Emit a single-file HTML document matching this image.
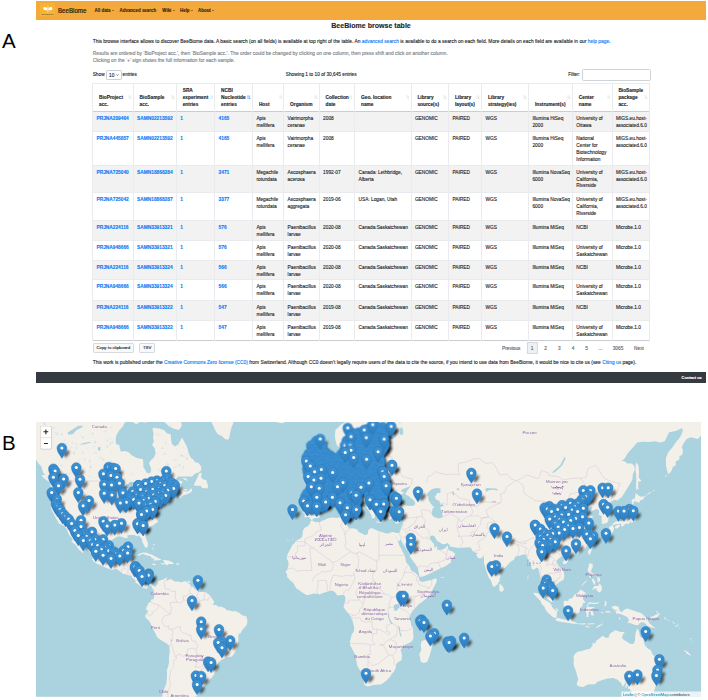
<!DOCTYPE html>
<html lang="en"><head><meta charset="utf-8"><title>BeeBiome browse table</title>
<style>
html,body{margin:0;padding:0;background:#fff}
body{width:708px;height:700px;position:relative;overflow:hidden}

#A{position:absolute;left:0;top:0;width:708px;height:400px;font-family:"Liberation Sans",Arial,Helvetica,sans-serif;color:#212529}
#A .t{position:absolute;white-space:nowrap;margin:0;-webkit-text-stroke:.12px currentColor}
#A a{color:#0a7cf6;text-decoration:none}
.nav{position:absolute;left:36px;top:1px;width:670.3px;height:18.5px;background:#f3a93b}
.logo{position:absolute;left:39.8px;top:3.4px}
.brand{left:57.8px;top:6.4px;transform:scaleX(.9);transform-origin:0 50%;font-size:6.85px;line-height:9px;color:#2a1d08;-webkit-text-stroke:.22px #2a1d08 !important}
.nl{top:7.3px;font-size:4.42px;line-height:7px;color:#33260f;font-weight:bold}
.car{display:inline-block;width:0;height:0;border-left:1.1px solid transparent;border-right:1.1px solid transparent;border-top:1.3px solid #3e3015;margin-left:1.3px;vertical-align:1px}
.title{left:92.6px;width:556.9px;text-align:center;top:21px;font-size:7.05px;line-height:9px;font-weight:bold}
.p1{left:92.7px;top:38.4px;font-size:4.89px;line-height:7px}
.p2{left:92.7px;top:50.2px;font-size:4.89px;line-height:7px;color:#7b8288}
.sm{font-size:4.75px;line-height:7px}
.sel{position:absolute;left:105.8px;top:70.1px;width:14.6px;height:7.6px;border:.6px solid #ccd0d4;border-radius:1.2px;background:#fff}
.inp{position:absolute;left:582.2px;top:69.3px;width:66.6px;height:9.9px;border:.6px solid #ced4da;border-radius:1.4px;background:#fff}
.tb{position:absolute;background:#fff}
.odd{position:absolute;background:#f2f2f2}
.hl{position:absolute;height:1px;background:#e9ebee}
.hl2{position:absolute;height:1.3px;background:#c9cdd1}
.vl{position:absolute;width:1px;background:#e9ebee}
.th{font-size:4.8px;line-height:7.15px;font-weight:bold}
.td{font-size:4.8px;line-height:6.9px}
.lk{color:#0a7cf6;font-weight:bold}
.si{position:absolute;top:94.6px;width:3.6px;height:4.6px}
.btn{position:absolute;top:342.6px;height:10.2px;border:.6px solid #d6d9dd;border-radius:1.2px;background:#f8f9fa;box-sizing:border-box}
.bt{left:0;right:0;text-align:center;top:.1px;font-size:4.35px;line-height:7px}
.pg{top:344.7px;font-size:4.75px;line-height:7px;color:#5c6166}
.pg.c{transform:translateX(-50%)}
.pgb{position:absolute;left:526.6px;top:341.6px;width:11.4px;height:12.2px;border:.6px solid #d5d9dd;background:#eef0f2;box-sizing:border-box}
.foot{position:absolute;left:36px;top:372px;width:670.3px;height:11px;background:#343a40}
.cu{left:681.6px;top:374.8px;font-size:3.9px;line-height:6px;color:#fff;font-weight:bold}
.lab{position:absolute;font-family:"Liberation Sans",Arial,sans-serif;font-size:20.5px;line-height:20px;color:#000}

</style></head><body>
<div class="lab" style="left:2px;top:31.3px">A</div>
<div class="lab" style="left:2px;top:433.3px">B</div>
<div id="A">
<div class="nav"></div>
<svg class="logo" viewBox="0 0 15 13.4" width="15" height="13.4"><rect width="15" height="13.4" fill="#f6b432"/><ellipse cx="5.4" cy="5.7" rx="2.2" ry="1.5" fill="#fff" transform="rotate(12 5.4 5.7)"/><ellipse cx="10.3" cy="5.7" rx="2.2" ry="1.5" fill="#fff" transform="rotate(-12 10.3 5.7)"/><ellipse cx="7.85" cy="6.3" rx=".75" ry="3.4" fill="#f3d9c4"/><circle cx="7.85" cy="2.7" r=".8" fill="#eebf8a"/><text x="7.7" y="12.2" font-size="2.5" font-weight="bold" text-anchor="middle" fill="#6d5a3c" font-family="Liberation Sans,sans-serif">BeeBiome</text></svg>
<span class="t brand">BeeBiome</span>
<span class="t nl" style="left:94.6px">All data<i class=car></i></span>
<span class="t nl" style="left:119.6px">Advanced search</span>
<span class="t nl" style="left:162.3px">Wiki<i class=car></i></span>
<span class="t nl" style="left:180.0px">Help<i class=car></i></span>
<span class="t nl" style="left:198.1px">About<i class=car></i></span>
<div class="t title">BeeBiome browse table</div>
<div class="t p1">This browse interface allows to discover BeeBiome data. A basic search (on all fields) is available at top right of the table. An <a>advanced search</a> is available to do a search on each field. More details on each field are available in our <a>help page</a>.</div>
<div class="t p2">Results are ordered by ‘BioProject acc.’, then ‘BioSample acc.’. The order could be changed by clicking on one column, then press shift and click on another column.</div>
<div class="t p2" style="top:57.2px">Clicking on the ‘+’ sign shows the full information for each sample.</div>
<span class="t sm" style="left:92.7px;top:70.7px">Show</span><span class="sel"><span class="t sm" style="left:2.2px;top:.6px">10</span><svg viewBox="0 0 6 4" style="position:absolute;left:9.6px;top:3.2px;width:3px;height:2px"><path d="M.7.7 3 3.2 5.3.7" fill="none" stroke="#333" stroke-width="1.1"/></svg></span><span class="t sm" style="left:122.6px;top:70.7px">entries</span>
<span class="t sm" style="left:285.8px;top:70.9px">Showing 1 to 10 of 30,645 entries</span>
<span class="t sm" style="left:568.2px;top:71.3px">Filter:</span><span class="inp"></span>
<div class="tb" style="left:92.6px;top:83.0px;width:556.9px;height:257.6px"></div>
<div class="odd" style="left:92.6px;top:111.5px;width:556.9px;height:20.1px"></div>
<div class="odd" style="left:92.6px;top:165.0px;width:556.9px;height:27.8px"></div>
<div class="odd" style="left:92.6px;top:220.2px;width:556.9px;height:19.8px"></div>
<div class="odd" style="left:92.6px;top:260.0px;width:556.9px;height:19.6px"></div>
<div class="odd" style="left:92.6px;top:300.0px;width:556.9px;height:20.0px"></div>
<div class="hl" style="left:92.6px;top:131.1px;width:556.9px"></div>
<div class="hl" style="left:92.6px;top:164.5px;width:556.9px"></div>
<div class="hl" style="left:92.6px;top:192.3px;width:556.9px"></div>
<div class="hl" style="left:92.6px;top:219.7px;width:556.9px"></div>
<div class="hl" style="left:92.6px;top:239.5px;width:556.9px"></div>
<div class="hl" style="left:92.6px;top:259.5px;width:556.9px"></div>
<div class="hl" style="left:92.6px;top:279.1px;width:556.9px"></div>
<div class="hl" style="left:92.6px;top:299.5px;width:556.9px"></div>
<div class="hl" style="left:92.6px;top:319.5px;width:556.9px"></div>
<div class="hl2" style="left:92.6px;top:110.5px;width:556.9px"></div>
<div class="hl2" style="left:92.6px;top:339.8px;width:556.9px;height:1px"></div>
<div class="vl" style="left:92.1px;top:83.0px;height:257.6px"></div>
<div class="vl" style="left:132.7px;top:83.0px;height:257.6px"></div>
<div class="vl" style="left:175.8px;top:83.0px;height:257.6px"></div>
<div class="vl" style="left:214.2px;top:83.0px;height:257.6px"></div>
<div class="vl" style="left:252.0px;top:83.0px;height:257.6px"></div>
<div class="vl" style="left:283.2px;top:83.0px;height:257.6px"></div>
<div class="vl" style="left:318.7px;top:83.0px;height:257.6px"></div>
<div class="vl" style="left:354.1px;top:83.0px;height:257.6px"></div>
<div class="vl" style="left:410.5px;top:83.0px;height:257.6px"></div>
<div class="vl" style="left:448.0px;top:83.0px;height:257.6px"></div>
<div class="vl" style="left:481.0px;top:83.0px;height:257.6px"></div>
<div class="vl" style="left:528.0px;top:83.0px;height:257.6px"></div>
<div class="vl" style="left:571.9px;top:83.0px;height:257.6px"></div>
<div class="vl" style="left:611.5px;top:83.0px;height:257.6px"></div>
<div class="vl" style="left:649.0px;top:83.0px;height:257.6px"></div>
<div class="hl" style="left:92.6px;top:82.5px;width:556.9px"></div>
<div class="t th" style="left:99.0px;top:94.0px">BioProject<br>acc.</div>
<svg class="si" style="left:128.0px" viewBox="0 0 8 10"><path d="M2.2 9V1.5M.4 3.2 2.2 1.2 4 3.2M5.8 1V8.5M4 6.8 5.8 8.8 7.6 6.8" fill="none" stroke="#d3d6d9" stroke-width="1"/></svg>
<div class="t th" style="left:139.6px;top:94.0px">BioSample<br>acc.</div>
<svg class="si" style="left:171.1px" viewBox="0 0 8 10"><path d="M2.2 9V1.5M.4 3.2 2.2 1.2 4 3.2M5.8 1V8.5M4 6.8 5.8 8.8 7.6 6.8" fill="none" stroke="#d3d6d9" stroke-width="1"/></svg>
<div class="t th" style="left:182.7px;top:86.8px">SRA<br>experiment<br>entries</div>
<svg class="si" style="left:209.5px" viewBox="0 0 8 10"><path d="M2.2 9V1.5M.4 3.2 2.2 1.2 4 3.2M5.8 1V8.5M4 6.8 5.8 8.8 7.6 6.8" fill="none" stroke="#d3d6d9" stroke-width="1"/></svg>
<div class="t th" style="left:221.1px;top:86.8px">NCBI<br>Nucleotide<br>entries</div>
<svg class="si" style="left:247.3px" viewBox="0 0 8 10"><path d="M2.2 9V1.5M.4 3.2 2.2 1.2 4 3.2M5.8 1V8.5M4 6.8 5.8 8.8 7.6 6.8" fill="none" stroke="#007bff" stroke-width="1"/></svg>
<div class="t th" style="left:258.9px;top:101.1px">Host</div>
<svg class="si" style="left:278.5px" viewBox="0 0 8 10"><path d="M2.2 9V1.5M.4 3.2 2.2 1.2 4 3.2M5.8 1V8.5M4 6.8 5.8 8.8 7.6 6.8" fill="none" stroke="#d3d6d9" stroke-width="1"/></svg>
<div class="t th" style="left:290.1px;top:101.1px">Organism</div>
<svg class="si" style="left:314.0px" viewBox="0 0 8 10"><path d="M2.2 9V1.5M.4 3.2 2.2 1.2 4 3.2M5.8 1V8.5M4 6.8 5.8 8.8 7.6 6.8" fill="none" stroke="#d3d6d9" stroke-width="1"/></svg>
<div class="t th" style="left:325.6px;top:94.0px">Collection<br>date</div>
<svg class="si" style="left:349.4px" viewBox="0 0 8 10"><path d="M2.2 9V1.5M.4 3.2 2.2 1.2 4 3.2M5.8 1V8.5M4 6.8 5.8 8.8 7.6 6.8" fill="none" stroke="#d3d6d9" stroke-width="1"/></svg>
<div class="t th" style="left:361.0px;top:94.0px">Geo. location<br>name</div>
<svg class="si" style="left:405.8px" viewBox="0 0 8 10"><path d="M2.2 9V1.5M.4 3.2 2.2 1.2 4 3.2M5.8 1V8.5M4 6.8 5.8 8.8 7.6 6.8" fill="none" stroke="#d3d6d9" stroke-width="1"/></svg>
<div class="t th" style="left:417.4px;top:94.0px">Library<br>source(s)</div>
<svg class="si" style="left:443.3px" viewBox="0 0 8 10"><path d="M2.2 9V1.5M.4 3.2 2.2 1.2 4 3.2M5.8 1V8.5M4 6.8 5.8 8.8 7.6 6.8" fill="none" stroke="#d3d6d9" stroke-width="1"/></svg>
<div class="t th" style="left:454.9px;top:94.0px">Library<br>layout(s)</div>
<svg class="si" style="left:476.3px" viewBox="0 0 8 10"><path d="M2.2 9V1.5M.4 3.2 2.2 1.2 4 3.2M5.8 1V8.5M4 6.8 5.8 8.8 7.6 6.8" fill="none" stroke="#d3d6d9" stroke-width="1"/></svg>
<div class="t th" style="left:487.9px;top:94.0px">Library<br>strategy(ies)</div>
<svg class="si" style="left:523.3px" viewBox="0 0 8 10"><path d="M2.2 9V1.5M.4 3.2 2.2 1.2 4 3.2M5.8 1V8.5M4 6.8 5.8 8.8 7.6 6.8" fill="none" stroke="#d3d6d9" stroke-width="1"/></svg>
<div class="t th" style="left:534.9px;top:101.1px">Instrument(s)</div>
<svg class="si" style="left:567.2px" viewBox="0 0 8 10"><path d="M2.2 9V1.5M.4 3.2 2.2 1.2 4 3.2M5.8 1V8.5M4 6.8 5.8 8.8 7.6 6.8" fill="none" stroke="#d3d6d9" stroke-width="1"/></svg>
<div class="t th" style="left:578.8px;top:94.0px">Center<br>name</div>
<svg class="si" style="left:606.8px" viewBox="0 0 8 10"><path d="M2.2 9V1.5M.4 3.2 2.2 1.2 4 3.2M5.8 1V8.5M4 6.8 5.8 8.8 7.6 6.8" fill="none" stroke="#d3d6d9" stroke-width="1"/></svg>
<div class="t th" style="left:618.4px;top:86.8px">BioSample<br>package<br>acc.</div>
<svg class="si" style="left:644.3px" viewBox="0 0 8 10"><path d="M2.2 9V1.5M.4 3.2 2.2 1.2 4 3.2M5.8 1V8.5M4 6.8 5.8 8.8 7.6 6.8" fill="none" stroke="#d3d6d9" stroke-width="1"/></svg>
<div class="t td lk" style="left:96.5px;top:116.1px">PRJNA209464</div>
<div class="t td lk" style="left:137.1px;top:116.1px">SAMN02213592</div>
<div class="t td lk" style="left:180.2px;top:116.1px">1</div>
<div class="t td lk" style="left:218.6px;top:116.1px">4165</div>
<div class="t td" style="left:256.4px;top:116.1px">Apis<br>mellifera</div>
<div class="t td" style="left:287.6px;top:116.1px">Vairimorpha<br>ceranae</div>
<div class="t td" style="left:323.1px;top:116.1px">2008</div>
<div class="t td" style="left:414.9px;top:116.1px">GENOMIC</div>
<div class="t td" style="left:452.4px;top:116.1px">PAIRED</div>
<div class="t td" style="left:485.4px;top:116.1px">WGS</div>
<div class="t td" style="left:532.4px;top:116.1px">Illumina HiSeq<br>2000</div>
<div class="t td" style="left:576.3px;top:116.1px">University of<br>Ottawa</div>
<div class="t td" style="left:615.9px;top:116.1px">MIGS.eu.host-<br>associated.6.0</div>
<div class="t td lk" style="left:96.5px;top:136.2px">PRJNA445857</div>
<div class="t td lk" style="left:137.1px;top:136.2px">SAMN02213592</div>
<div class="t td lk" style="left:180.2px;top:136.2px">1</div>
<div class="t td lk" style="left:218.6px;top:136.2px">4165</div>
<div class="t td" style="left:256.4px;top:136.2px">Apis<br>mellifera</div>
<div class="t td" style="left:287.6px;top:136.2px">Vairimorpha<br>ceranae</div>
<div class="t td" style="left:323.1px;top:136.2px">2008</div>
<div class="t td" style="left:414.9px;top:136.2px">GENOMIC</div>
<div class="t td" style="left:452.4px;top:136.2px">PAIRED</div>
<div class="t td" style="left:485.4px;top:136.2px">WGS</div>
<div class="t td" style="left:532.4px;top:136.2px">Illumina HiSeq<br>2000</div>
<div class="t td" style="left:576.3px;top:136.2px">National<br>Center for<br>Biotechnology<br>Information</div>
<div class="t td" style="left:615.9px;top:136.2px">MIGS.eu.host-<br>associated.6.0</div>
<div class="t td lk" style="left:96.5px;top:169.6px">PRJNA725040</div>
<div class="t td lk" style="left:137.1px;top:169.6px">SAMN18868284</div>
<div class="t td lk" style="left:180.2px;top:169.6px">1</div>
<div class="t td lk" style="left:218.6px;top:169.6px">3471</div>
<div class="t td" style="left:256.4px;top:169.6px">Megachile<br>rotundata</div>
<div class="t td" style="left:287.6px;top:169.6px">Ascosphaera<br>acerosa</div>
<div class="t td" style="left:323.1px;top:169.6px">1992-07</div>
<div class="t td" style="left:358.5px;top:169.6px">Canada: Lethbridge,<br>Alberta</div>
<div class="t td" style="left:414.9px;top:169.6px">GENOMIC</div>
<div class="t td" style="left:452.4px;top:169.6px">PAIRED</div>
<div class="t td" style="left:485.4px;top:169.6px">WGS</div>
<div class="t td" style="left:532.4px;top:169.6px">Illumina NovaSeq<br>6000</div>
<div class="t td" style="left:576.3px;top:169.6px">University of<br>California,<br>Riverside</div>
<div class="t td" style="left:615.9px;top:169.6px">MIGS.eu.host-<br>associated.6.0</div>
<div class="t td lk" style="left:96.5px;top:197.4px">PRJNA725042</div>
<div class="t td lk" style="left:137.1px;top:197.4px">SAMN18868287</div>
<div class="t td lk" style="left:180.2px;top:197.4px">1</div>
<div class="t td lk" style="left:218.6px;top:197.4px">3377</div>
<div class="t td" style="left:256.4px;top:197.4px">Megachile<br>rotundata</div>
<div class="t td" style="left:287.6px;top:197.4px">Ascosphaera<br>aggregata</div>
<div class="t td" style="left:323.1px;top:197.4px">2019-06</div>
<div class="t td" style="left:358.5px;top:197.4px">USA: Logan, Utah</div>
<div class="t td" style="left:414.9px;top:197.4px">GENOMIC</div>
<div class="t td" style="left:452.4px;top:197.4px">PAIRED</div>
<div class="t td" style="left:485.4px;top:197.4px">WGS</div>
<div class="t td" style="left:532.4px;top:197.4px">Illumina NovaSeq<br>6000</div>
<div class="t td" style="left:576.3px;top:197.4px">University of<br>California,<br>Riverside</div>
<div class="t td" style="left:615.9px;top:197.4px">MIGS.eu.host-<br>associated.6.0</div>
<div class="t td lk" style="left:96.5px;top:224.8px">PRJNA224116</div>
<div class="t td lk" style="left:137.1px;top:224.8px">SAMN33913321</div>
<div class="t td lk" style="left:180.2px;top:224.8px">1</div>
<div class="t td lk" style="left:218.6px;top:224.8px">576</div>
<div class="t td" style="left:256.4px;top:224.8px">Apis<br>mellifera</div>
<div class="t td" style="left:287.6px;top:224.8px">Paenibacillus<br>larvae</div>
<div class="t td" style="left:323.1px;top:224.8px">2020-08</div>
<div class="t td" style="left:358.5px;top:224.8px">Canada:Saskatchewan</div>
<div class="t td" style="left:414.9px;top:224.8px">GENOMIC</div>
<div class="t td" style="left:452.4px;top:224.8px">PAIRED</div>
<div class="t td" style="left:485.4px;top:224.8px">WGS</div>
<div class="t td" style="left:532.4px;top:224.8px">Illumina MiSeq</div>
<div class="t td" style="left:576.3px;top:224.8px">NCBI</div>
<div class="t td" style="left:615.9px;top:224.8px">Microbe.1.0</div>
<div class="t td lk" style="left:96.5px;top:244.6px">PRJNA948666</div>
<div class="t td lk" style="left:137.1px;top:244.6px">SAMN33913321</div>
<div class="t td lk" style="left:180.2px;top:244.6px">1</div>
<div class="t td lk" style="left:218.6px;top:244.6px">576</div>
<div class="t td" style="left:256.4px;top:244.6px">Apis<br>mellifera</div>
<div class="t td" style="left:287.6px;top:244.6px">Paenibacillus<br>larvae</div>
<div class="t td" style="left:323.1px;top:244.6px">2020-08</div>
<div class="t td" style="left:358.5px;top:244.6px">Canada:Saskatchewan</div>
<div class="t td" style="left:414.9px;top:244.6px">GENOMIC</div>
<div class="t td" style="left:452.4px;top:244.6px">PAIRED</div>
<div class="t td" style="left:485.4px;top:244.6px">WGS</div>
<div class="t td" style="left:532.4px;top:244.6px">Illumina MiSeq</div>
<div class="t td" style="left:576.3px;top:244.6px">University of<br>Saskatchewan</div>
<div class="t td" style="left:615.9px;top:244.6px">Microbe.1.0</div>
<div class="t td lk" style="left:96.5px;top:264.6px">PRJNA224116</div>
<div class="t td lk" style="left:137.1px;top:264.6px">SAMN33913324</div>
<div class="t td lk" style="left:180.2px;top:264.6px">1</div>
<div class="t td lk" style="left:218.6px;top:264.6px">566</div>
<div class="t td" style="left:256.4px;top:264.6px">Apis<br>mellifera</div>
<div class="t td" style="left:287.6px;top:264.6px">Paenibacillus<br>larvae</div>
<div class="t td" style="left:323.1px;top:264.6px">2020-08</div>
<div class="t td" style="left:358.5px;top:264.6px">Canada:Saskatchewan</div>
<div class="t td" style="left:414.9px;top:264.6px">GENOMIC</div>
<div class="t td" style="left:452.4px;top:264.6px">PAIRED</div>
<div class="t td" style="left:485.4px;top:264.6px">WGS</div>
<div class="t td" style="left:532.4px;top:264.6px">Illumina MiSeq</div>
<div class="t td" style="left:576.3px;top:264.6px">NCBI</div>
<div class="t td" style="left:615.9px;top:264.6px">Microbe.1.0</div>
<div class="t td lk" style="left:96.5px;top:284.2px">PRJNA948666</div>
<div class="t td lk" style="left:137.1px;top:284.2px">SAMN33913324</div>
<div class="t td lk" style="left:180.2px;top:284.2px">1</div>
<div class="t td lk" style="left:218.6px;top:284.2px">566</div>
<div class="t td" style="left:256.4px;top:284.2px">Apis<br>mellifera</div>
<div class="t td" style="left:287.6px;top:284.2px">Paenibacillus<br>larvae</div>
<div class="t td" style="left:323.1px;top:284.2px">2020-08</div>
<div class="t td" style="left:358.5px;top:284.2px">Canada:Saskatchewan</div>
<div class="t td" style="left:414.9px;top:284.2px">GENOMIC</div>
<div class="t td" style="left:452.4px;top:284.2px">PAIRED</div>
<div class="t td" style="left:485.4px;top:284.2px">WGS</div>
<div class="t td" style="left:532.4px;top:284.2px">Illumina MiSeq</div>
<div class="t td" style="left:576.3px;top:284.2px">University of<br>Saskatchewan</div>
<div class="t td" style="left:615.9px;top:284.2px">Microbe.1.0</div>
<div class="t td lk" style="left:96.5px;top:304.6px">PRJNA224116</div>
<div class="t td lk" style="left:137.1px;top:304.6px">SAMN33913322</div>
<div class="t td lk" style="left:180.2px;top:304.6px">1</div>
<div class="t td lk" style="left:218.6px;top:304.6px">547</div>
<div class="t td" style="left:256.4px;top:304.6px">Apis<br>mellifera</div>
<div class="t td" style="left:287.6px;top:304.6px">Paenibacillus<br>larvae</div>
<div class="t td" style="left:323.1px;top:304.6px">2019-08</div>
<div class="t td" style="left:358.5px;top:304.6px">Canada:Saskatchewan</div>
<div class="t td" style="left:414.9px;top:304.6px">GENOMIC</div>
<div class="t td" style="left:452.4px;top:304.6px">PAIRED</div>
<div class="t td" style="left:485.4px;top:304.6px">WGS</div>
<div class="t td" style="left:532.4px;top:304.6px">Illumina MiSeq</div>
<div class="t td" style="left:576.3px;top:304.6px">NCBI</div>
<div class="t td" style="left:615.9px;top:304.6px">Microbe.1.0</div>
<div class="t td lk" style="left:96.5px;top:324.6px">PRJNA948666</div>
<div class="t td lk" style="left:137.1px;top:324.6px">SAMN33913322</div>
<div class="t td lk" style="left:180.2px;top:324.6px">1</div>
<div class="t td lk" style="left:218.6px;top:324.6px">547</div>
<div class="t td" style="left:256.4px;top:324.6px">Apis<br>mellifera</div>
<div class="t td" style="left:287.6px;top:324.6px">Paenibacillus<br>larvae</div>
<div class="t td" style="left:323.1px;top:324.6px">2019-08</div>
<div class="t td" style="left:358.5px;top:324.6px">Canada:Saskatchewan</div>
<div class="t td" style="left:414.9px;top:324.6px">GENOMIC</div>
<div class="t td" style="left:452.4px;top:324.6px">PAIRED</div>
<div class="t td" style="left:485.4px;top:324.6px">WGS</div>
<div class="t td" style="left:532.4px;top:324.6px">Illumina MiSeq</div>
<div class="t td" style="left:576.3px;top:324.6px">University of<br>Saskatchewan</div>
<div class="t td" style="left:615.9px;top:324.6px">Microbe.1.0</div>
<span class="btn" style="left:92.6px;width:41.4px"><span class="t bt">Copy to clipboard</span></span>
<span class="btn" style="left:139px;width:16.4px"><span class="t bt">TSV</span></span>
<span class="t pg" style="left:502px">Previous</span>
<span class="pgb"></span>
<span class="t pg c" style="left:532.2px">1</span>
<span class="t pg c" style="left:545.6px">2</span>
<span class="t pg c" style="left:559.4px">3</span>
<span class="t pg c" style="left:573px">4</span>
<span class="t pg c" style="left:586.6px">5</span>
<span class="t pg c" style="left:600.3px">…</span>
<span class="t pg c" style="left:618px">3065</span>
<span class="t pg c" style="left:639px">Next</span>
<div class="t p1" style="top:358.9px">This work is published under the <a>Creative Commons Zero license (CC0)</a> from Switzerland. Although CC0 doesn’t legally require users of the data to cite the source, if you intend to use data from BeeBiome, it would be nice to cite us (see <a>Citing us</a> page).</div>
<div class="foot"></div><span class="t cu">Contact us</span>
</div>
<svg id="map" viewBox="36.4 422.4 665.1 274.8" style="position:absolute;left:36.4px;top:422.4px;width:665.1px;height:274.8px;overflow:hidden">
<defs><filter id="sb" x="-50%" y="-50%" width="200%" height="200%"><feGaussianBlur stdDeviation=".8"/></filter><linearGradient id="pg" x1="0" y1="0" x2="0" y2="1"><stop offset="0" stop-color="#3c93d4"/><stop offset="1" stop-color="#2b7dc0"/></linearGradient><g id="pin"><path d="M0,10.3C-1.2,7.8 -4.9,4.3 -4.9,0A4.9,4.9 0 1 1 4.9,0C4.9,4.3 1.2,7.8 0,10.3Z" fill="url(#pg)" stroke="#2a73b2" stroke-width=".45"/><circle r="1.5" fill="#fff"/></g><path id="pn" d="M0,10.3C-1.2,7.8 -4.9,4.3 -4.9,0A4.9,4.9 0 1 1 4.9,0C4.9,4.3 1.2,7.8 0,10.3Z" fill="url(#pg)" stroke="#2f7fc2" stroke-width=".4"/><ellipse id="sh" cx="4.7" cy="5.5" rx="2.1" ry="3.8" transform="rotate(36 4.7 5.5)" fill="#000" opacity=".6"/></defs>
<rect x="36.4" y="422.4" width="665.1" height="274.80000000000007" fill="#aad3df"/>
<path fill="#f3f0ea" d="M16.7,373.3L16.7,439.5L23.3,444.7L27.7,448.0L31.0,454.1L36.5,460.0L38.0,462.6L42.0,467.5L43.5,472.8L47.5,477.4L50.1,480.1L53.6,481.1L55.4,483.8L54.9,487.0L52.9,484.4L50.3,483.4L51.6,488.7L51.8,490.6L51.6,497.4L50.7,501.0L51.4,504.9L51.2,508.1L52.3,511.2L54.5,514.9L55.1,516.3L56.5,518.8L58.4,521.8L59.3,524.2L62.4,525.2L64.2,526.3L66.8,529.2L68.1,532.3L69.7,535.6L72.1,538.2L73.4,540.4L71.6,541.7L73.8,543.6L76.5,545.6L77.8,548.0L79.1,550.0L82.0,552.1L82.8,553.6L83.9,552.4L82.0,550.2L80.4,547.3L79.1,544.6L76.7,541.9L75.4,538.9L73.2,536.1L72.3,533.6L72.1,531.5L75.6,532.8L77.1,536.1L78.0,538.7L80.4,541.4L83.1,544.1L85.3,547.3L87.9,550.0L90.3,552.6L92.3,555.7L93.0,558.6L92.3,560.0L94.7,562.3L97.6,564.4L100.6,565.5L104.6,567.4L109.0,569.2L112.3,570.4L115.6,569.4L117.8,569.7L120.4,572.0L123.3,574.2L126.6,574.9L129.9,576.0L131.9,576.5L132.7,578.1L135.4,580.3L136.0,581.9L135.8,583.2L137.8,583.9L140.4,586.1L142.2,587.4L144.8,588.6L146.8,589.2L148.1,588.6L147.7,587.2L149.4,585.7L151.6,586.3L152.5,588.1L153.2,589.4L154.3,586.3L151.9,584.3L149.7,584.1L147.5,585.2L145.3,585.7L143.5,584.8L142.0,583.2L140.6,581.2L140.2,579.2L140.9,576.5L141.3,574.2L141.5,572.0L138.7,570.1L135.4,569.9L132.1,570.1L129.7,570.1L130.3,567.8L130.8,565.1L131.4,564.2L132.1,561.6L132.5,559.7L133.6,557.4L131.0,556.7L127.7,557.4L125.7,558.1L125.0,560.9L123.7,563.2L121.1,563.9L117.8,564.6L114.9,563.5L113.0,562.1L111.4,559.5L110.1,556.9L109.4,554.3L109.7,550.9L110.8,546.3L110.3,542.9L112.1,540.4L115.2,538.7L116.7,537.4L118.9,536.6L122.2,537.2L124.4,538.2L126.6,538.4L128.3,538.4L127.5,535.9L129.9,535.4L132.1,535.4L134.7,535.1L136.7,536.6L139.1,536.0L141.3,537.9L142.6,540.4L142.6,542.2L143.9,544.6L144.8,546.3L146.1,548.2L147.7,548.0L148.3,546.1L148.5,543.9L147.2,540.4L145.9,537.2L145.5,534.4L146.4,531.5L148.6,529.2L150.8,527.1L153.2,526.0L155.8,523.9L158.2,522.6L157.6,519.0L156.7,517.7L156.5,514.9L156.3,511.8L157.4,513.5L157.6,517.1L159.1,514.3L159.3,512.7L158.7,511.0L159.8,512.2L161.3,510.1L161.7,508.1L162.8,507.5L166.1,506.5L164.4,505.8L167.2,505.2L169.2,504.6L170.5,504.3L170.3,503.3L169.0,503.6L168.6,501.6L169.2,499.8L170.1,498.3L172.7,497.1L174.9,496.2L177.1,495.0L177.4,494.0L179.6,493.7L181.7,492.5L182.8,493.4L179.8,495.9L179.1,498.0L180.7,498.9L183.1,496.2L184.8,495.4L188.1,494.3L190.3,493.4L192.5,491.5L191.9,488.3L189.7,490.6L188.3,491.8L185.5,492.0L183.3,490.6L181.7,488.0L181.5,485.4L178.7,484.8L182.0,484.1L183.1,481.9L179.8,480.8L176.0,481.8L172.7,484.1L170.1,487.0L168.1,488.7L170.5,485.7L172.1,483.1L174.3,480.8L177.1,478.7L178.5,477.2L182.6,477.0L188.1,477.0L192.5,477.0L195.6,473.9L199.1,473.0L201.3,471.1L201.8,467.5L200.2,464.9L198.2,463.0L195.8,463.0L193.6,460.0L191.4,458.4L189.2,454.1L188.3,450.1L186.8,445.9L184.4,441.7L182.4,437.9L180.7,440.8L178.7,444.7L175.4,446.8L172.3,444.3L171.4,439.5L171.2,435.0L167.2,433.7L164.4,430.4L159.5,429.0L155.2,428.1L152.7,429.0L154.1,434.1L153.4,438.6L154.5,441.7L152.5,445.1L155.2,448.9L156.0,454.1L154.1,458.1L150.8,461.1L149.4,463.8L151.0,467.5L151.6,470.4L150.8,473.2L149.2,473.9L147.0,472.8L145.3,470.0L143.7,467.5L143.7,463.0L143.3,459.6L139.8,458.8L136.5,458.1L132.1,455.7L128.8,452.5L124.8,451.3L121.3,452.1L120.4,448.9L119.5,445.1L116.5,444.7L116.0,439.5L117.1,435.0L120.0,430.4L123.3,426.6L125.0,423.2L128.8,420.7L131.0,419.7L134.3,413.0L135.4,373.3ZM179.3,430.4L182.2,426.2L181.5,422.2L183.7,418.2L179.3,410.3L159.5,410.3L153.0,415.6L155.2,419.2L160.6,417.7L165.0,422.7L169.4,426.6L173.8,429.0ZM133.2,422.2L136.5,424.7L140.9,422.2L146.4,423.2L148.1,420.7L144.2,413.0L135.4,413.0ZM194.1,485.7L195.8,486.1L198.0,486.1L201.3,486.1L202.4,488.3L205.3,488.7L207.7,489.0L208.6,486.4L207.5,483.4L206.6,480.4L203.9,479.8L201.3,477.7L202.2,473.5L199.8,473.5L198.5,476.3L196.9,479.8L195.4,482.8ZM182.6,478.4L185.9,478.7L188.8,481.1L185.3,480.4ZM182.8,489.0L185.5,489.6L188.1,489.8L187.0,491.2L184.6,490.7ZM42.2,475.3L45.3,475.3L49.2,478.1L52.9,482.4L53.2,483.6L50.1,482.9L46.4,480.1L43.1,477.4ZM32.1,463.0L34.9,463.8L36.0,469.3L34.5,468.9L32.5,466.0ZM137.8,556.1L139.3,554.3L142.0,553.3L144.2,552.9L147.2,553.1L149.7,554.3L152.3,555.0L154.5,556.3L157.4,557.6L159.5,558.8L161.3,559.7L161.3,560.3L158.5,560.7L153.6,560.8L154.7,559.0L152.3,558.8L151.2,556.7L148.1,556.2L145.3,555.2L143.1,554.1L141.3,555.2L139.3,556.2ZM160.9,564.2L162.2,563.7L165.3,563.7L164.4,562.1L163.1,560.9L164.6,560.5L166.8,560.7L169.4,560.9L171.0,561.8L172.3,562.3L174.2,563.7L173.4,564.6L170.5,564.4L169.0,564.4L167.5,565.9L166.6,564.8L164.4,564.7L162.2,565.0ZM152.2,564.4L154.1,563.9L155.6,564.4L156.9,565.1L155.4,565.4L153.6,565.4L152.2,564.7ZM176.6,564.0L179.3,563.9L180.1,564.5L178.9,565.2L176.7,565.1ZM188.3,581.7L190.5,581.4L190.3,583.0L188.3,583.1ZM154.3,586.3L155.6,587.7L156.7,585.7L158.2,584.1L158.5,581.9L160.0,580.8L161.7,580.3L163.9,579.9L166.1,578.3L167.7,577.8L167.2,579.6L166.4,580.3L167.5,581.2L168.3,580.3L170.1,579.6L170.5,578.4L171.2,579.9L173.6,580.3L174.5,581.9L177.1,581.9L179.3,581.9L181.5,583.0L183.3,582.1L185.9,581.7L188.1,581.7L186.8,582.5L188.3,583.4L190.3,584.6L190.8,586.6L192.7,587.0L195.6,589.7L198.7,592.3L201.8,592.3L205.7,592.5L208.3,594.1L210.8,596.1L212.1,598.7L214.1,601.3L214.7,603.1L212.7,604.9L214.5,605.5L216.7,605.5L217.8,606.4L218.7,607.1L221.1,606.8L224.4,608.2L226.4,609.5L226.8,611.0L229.0,610.6L232.7,611.7L236.5,611.6L239.8,613.4L242.4,615.6L245.3,616.5L246.8,617.0L247.8,620.9L247.5,624.7L245.7,627.2L244.2,628.7L242.6,630.7L240.9,633.7L239.1,634.1L238.7,637.5L238.9,640.9L238.2,644.8L237.1,649.0L235.8,651.3L234.3,654.4L232.3,657.0L229.4,657.3L226.4,658.0L224.6,659.2L222.4,659.9L219.1,662.6L217.6,665.0L217.6,669.4L216.0,671.7L214.3,675.2L212.7,677.5L211.0,679.1L209.9,680.4L207.0,684.0L205.7,686.2L203.5,687.2L200.9,687.2L197.4,685.9L196.0,684.8L196.3,687.0L198.7,688.6L199.8,691.3L198.0,695.7L194.7,697.7L190.3,698.5L187.5,698.5L187.5,704.2L181.5,710.2L157.4,710.2L162.2,701.4L162.8,695.7L163.3,693.2L164.6,689.4L166.6,684.3L167.2,679.6L167.5,674.5L167.2,670.7L168.6,667.0L169.4,663.0L169.4,658.5L170.1,652.5L169.9,646.4L167.5,644.1L164.6,642.3L160.6,640.2L157.6,637.7L156.5,635.5L154.9,632.1L153.6,629.6L152.5,627.4L151.0,623.8L149.0,620.7L146.1,618.5L145.7,615.6L147.7,613.0L148.8,610.8L146.6,610.4L146.8,607.5L148.3,605.3L148.6,603.5L151.0,602.4L151.6,599.8L153.8,599.6L154.7,596.7L154.1,593.2L154.3,590.8L153.2,589.4ZM203.5,373.3L205.7,404.8L207.9,410.3L210.1,419.2L213.4,425.7L216.0,431.4L218.5,435.0L222.2,436.4L225.1,439.1L227.7,440.2L229.4,439.1L230.3,435.0L231.4,429.5L233.2,424.7L235.4,419.2L236.9,414.1L242.0,411.4L247.5,408.7L258.5,399.1L269.4,373.3ZM274.9,421.7L279.3,423.2L282.6,423.7L287.0,422.0L291.4,419.2L294.5,415.6L291.9,409.3L284.8,409.3L276.0,408.7L271.6,413.0ZM335.4,373.3L350.8,410.3L347.5,418.2L345.3,422.7L342.0,424.7L338.7,427.6L335.8,430.4L335.4,435.0L335.6,439.5L336.3,442.5L337.1,445.5L339.8,448.0L342.4,447.2L345.3,444.3L347.5,442.5L348.4,443.0L349.0,445.9L350.3,448.9L351.9,452.9L352.3,455.3L352.8,458.1L355.8,458.1L356.3,456.1L359.6,454.9L360.7,450.9L361.1,447.2L362.9,444.7L365.1,442.1L365.9,439.5L362.6,436.4L362.2,431.8L363.1,428.5L365.1,425.7L368.4,422.2L371.2,417.7L372.8,412.5L378.3,411.4L380.0,415.1L378.3,418.2L374.5,422.7L371.7,425.7L371.2,430.4L371.4,434.1L371.7,436.4L373.9,438.6L375.0,439.9L378.3,439.1L381.5,437.7L384.8,437.3L387.7,437.3L389.9,439.5L387.0,440.8L383.7,441.7L380.4,441.5L377.8,441.9L375.8,443.0L376.3,445.5L378.3,446.8L378.0,449.7L377.2,451.7L375.4,452.1L374.1,449.3L371.9,450.1L370.6,453.3L370.6,457.3L369.5,460.0L368.1,461.5L367.0,462.5L365.3,462.1L364.0,460.7L360.7,461.9L357.4,463.4L355.6,464.1L354.1,462.3L351.4,463.0L348.6,463.8L348.1,462.6L346.4,461.5L346.2,459.2L347.0,456.5L348.4,454.1L347.3,451.3L347.7,449.3L345.5,451.3L342.6,452.1L342.2,456.1L342.4,458.1L343.3,460.4L344.0,463.8L343.1,464.9L339.8,465.3L337.6,466.0L335.4,466.7L334.7,468.2L333.6,470.7L332.1,473.2L329.9,474.3L327.9,475.3L327.7,477.4L324.8,479.1L324.0,480.4L321.8,480.1L321.3,479.1L320.2,479.1L320.9,482.4L318.9,482.8L316.7,482.1L314.1,483.1L314.5,485.1L317.8,486.1L319.6,487.4L320.0,489.0L321.8,491.2L322.0,492.8L321.8,495.6L321.1,498.9L320.4,499.2L316.7,498.9L312.3,498.6L309.0,498.6L306.8,498.0L304.2,500.1L305.1,502.8L305.1,506.4L305.1,509.2L303.7,511.2L303.5,512.9L305.1,513.8L305.1,516.3L304.8,517.7L306.8,517.7L308.4,517.1L310.3,518.2L311.2,519.9L312.1,520.4L312.8,519.9L314.7,518.5L316.7,518.5L319.6,518.2L320.7,516.6L322.6,516.0L324.0,513.8L324.8,512.7L323.7,511.0L324.8,508.7L326.4,506.4L329.2,505.2L331.4,503.7L331.2,501.9L331.0,499.8L333.2,498.9L335.4,499.2L338.0,500.1L340.2,498.3L342.4,497.4L344.0,496.2L345.9,497.1L347.0,498.9L347.5,500.7L349.0,502.2L351.2,504.0L353.0,505.5L355.2,506.9L356.3,507.5L357.4,508.7L358.9,509.2L359.6,512.1L359.1,514.1L358.8,515.0L359.8,515.2L360.9,513.8L362.0,512.1L360.7,510.1L361.5,508.0L362.4,508.2L364.0,509.4L364.8,509.8L365.1,508.7L364.0,507.2L361.8,506.1L359.6,504.9L360.0,503.7L358.0,503.4L356.7,502.8L355.2,501.0L354.3,498.9L352.1,497.4L351.4,495.0L351.4,493.4L353.2,492.1L354.5,492.1L354.3,494.0L355.0,495.0L355.8,493.4L357.2,494.3L357.8,496.8L359.6,498.9L361.8,500.4L364.0,501.6L365.1,502.2L366.6,503.7L367.3,505.5L366.8,507.8L368.4,510.1L369.9,512.1L370.8,514.1L371.9,515.7L372.1,518.2L373.6,519.0L374.5,518.2L375.2,519.0L375.4,516.8L375.0,515.2L377.2,515.7L377.2,514.3L375.6,512.9L374.7,511.2L374.1,509.2L374.7,507.8L375.8,508.7L376.9,509.4L378.0,508.7L377.2,507.2L379.3,506.7L381.5,506.9L382.0,508.4L383.3,507.8L384.8,506.7L387.0,506.4L388.1,505.8L386.2,504.6L385.9,503.4L385.3,501.3L385.7,499.8L387.3,498.9L387.3,496.8L389.5,494.3L390.8,491.8L392.1,489.6L393.6,489.3L395.2,490.6L396.9,490.9L398.3,491.4L396.1,493.1L398.0,495.9L399.1,496.2L402.2,494.3L404.8,493.2L401.8,491.8L401.3,490.6L404.6,489.0L407.9,487.7L410.8,487.4L408.6,489.6L407.5,491.2L406.6,493.1L405.3,494.0L406.8,495.3L409.0,496.5L411.7,498.9L414.5,501.0L415.8,504.3L413.4,506.4L410.1,506.1L406.8,506.1L404.6,505.5L401.8,503.4L398.0,503.4L394.7,504.3L392.5,506.1L390.1,505.9L388.4,505.8L389.2,507.1L387.7,508.1L384.8,508.2L383.1,508.1L382.0,509.2L381.8,510.7L383.3,511.2L383.3,512.9L382.2,514.1L384.2,515.2L384.4,516.8L384.8,517.7L386.6,518.5L388.4,518.8L389.7,520.0L391.4,519.6L391.9,518.1L394.3,518.9L396.1,520.1L398.5,520.0L400.7,518.2L402.6,518.8L404.0,518.8L403.3,520.4L403.1,523.1L403.3,524.4L402.4,526.0L401.5,528.1L401.1,529.7L400.7,531.3L399.8,532.8L398.7,533.3L395.8,533.3L395.4,532.8L393.6,532.3L391.0,532.8L389.2,533.8L385.9,533.6L383.7,532.8L380.4,532.0L377.2,530.8L375.4,530.0L372.8,528.7L370.6,528.9L368.5,530.8L368.4,533.6L367.3,535.1L365.1,535.4L361.8,533.6L358.9,532.3L357.8,530.0L355.2,529.2L353.4,528.7L350.8,528.9L349.0,527.9L347.9,526.6L346.6,525.2L347.9,523.9L348.6,521.8L347.7,520.4L348.6,517.8L346.8,517.4L345.9,516.8L343.1,518.0L339.8,518.0L336.5,518.5L333.2,518.0L331.0,518.2L327.7,519.0L324.4,520.7L322.6,521.2L320.0,522.8L317.8,522.3L315.6,522.6L312.8,521.0L311.4,521.0L310.6,523.1L309.5,525.5L307.7,526.8L305.5,527.9L304.0,529.7L302.9,532.3L303.1,534.9L302.2,537.7L299.8,539.4L296.0,541.4L294.9,543.6L292.5,545.6L291.4,548.5L289.5,551.7L288.1,554.5L286.9,558.3L288.1,560.4L288.8,562.8L289.0,565.1L288.1,568.5L287.9,569.7L285.9,572.5L287.5,574.7L287.5,577.6L288.8,578.7L290.3,580.3L291.4,581.4L293.6,583.2L294.3,584.3L295.4,586.6L296.9,589.0L299.1,590.1L300.7,591.4L303.5,593.4L306.8,595.4L307.9,595.7L311.2,594.7L314.5,593.9L317.8,594.1L320.0,594.9L323.3,593.4L326.6,592.3L329.9,591.4L332.1,591.2L334.3,591.6L336.0,593.4L337.6,595.8L339.8,595.6L342.6,595.4L344.0,595.4L345.5,596.7L345.9,598.7L345.7,600.9L345.1,603.1L344.8,604.6L343.7,606.8L345.3,609.7L347.5,612.3L349.7,614.8L350.8,616.3L351.4,618.5L352.8,620.7L353.6,624.0L354.7,628.5L354.3,631.9L352.1,635.0L351.2,638.6L350.3,642.1L350.3,645.5L351.9,647.8L353.6,651.3L356.1,656.1L356.3,657.3L356.9,662.1L357.6,666.0L360.0,670.2L361.5,672.7L363.1,677.0L364.4,679.6L364.4,682.2L364.8,685.4L366.8,686.4L368.4,687.0L371.7,685.9L375.0,685.1L379.3,684.8L380.9,684.8L383.7,683.5L387.0,680.9L390.3,677.5L392.5,674.0L394.7,671.4L396.5,667.0L396.7,664.5L398.0,662.8L402.0,660.4L402.4,656.1L402.0,653.7L400.9,650.2L403.5,647.4L405.7,645.1L409.0,643.7L412.3,641.6L413.9,638.6L413.9,636.4L413.4,633.0L413.4,628.5L411.9,626.3L411.2,622.9L410.8,620.3L409.7,618.5L410.1,616.3L411.4,614.1L412.8,611.5L414.5,609.7L416.7,607.5L418.9,604.9L422.2,602.4L424.2,600.9L426.6,599.1L429.9,595.4L432.1,592.1L433.9,588.1L435.8,584.8L436.9,582.1L437.2,579.2L435.4,579.0L432.1,580.3L428.8,580.8L425.5,581.7L422.2,582.3L420.0,581.0L419.4,579.9L419.6,578.1L418.3,575.8L415.6,573.1L413.4,572.0L411.2,570.6L410.6,568.5L409.0,565.1L406.8,563.5L406.2,561.4L405.7,558.1L405.1,555.7L402.9,552.1L402.0,549.7L400.2,546.8L399.1,544.1L398.3,541.7L396.3,538.2L395.8,536.3L396.5,537.7L397.4,539.9L399.6,541.8L400.5,539.9L401.2,537.4L401.1,539.9L401.8,541.2L403.5,544.1L405.5,547.3L406.4,549.7L408.0,550.7L410.1,554.5L410.3,556.9L412.3,560.0L414.5,562.8L416.3,565.1L417.8,567.4L418.5,569.7L418.9,572.0L419.4,574.7L420.0,577.2L422.2,577.2L423.3,576.9L426.6,575.6L429.9,574.2L433.2,572.4L436.5,571.0L439.1,569.7L442.0,568.1L445.3,566.9L448.6,564.6L451.4,562.8L451.2,560.0L453.0,559.0L454.1,556.9L455.8,554.5L454.1,552.9L453.0,551.9L449.7,550.9L448.4,548.8L448.3,545.4L447.5,546.6L445.9,547.8L444.0,549.7L440.5,550.5L437.8,550.5L437.8,548.5L436.9,545.9L436.1,547.3L435.8,548.8L434.7,547.1L434.5,544.4L432.5,542.4L431.2,540.4L429.9,537.7L431.2,536.3L433.2,535.9L434.7,536.4L436.1,538.9L437.6,541.4L440.0,542.7L443.1,544.6L446.4,544.1L448.1,543.4L449.7,544.9L450.3,546.8L453.0,547.3L456.3,547.8L459.6,548.3L464.0,547.8L467.3,547.8L470.6,547.6L471.7,549.0L472.8,551.2L475.0,552.6L478.3,553.6L476.5,555.0L478.3,558.1L480.5,558.8L483.1,557.6L483.8,555.2L484.4,558.1L484.4,562.8L485.5,567.4L486.6,570.8L488.2,575.4L489.2,578.1L491.0,580.5L492.1,583.4L493.4,586.6L494.9,587.5L496.3,585.7L498.0,584.8L498.7,582.5L499.9,582.4L499.9,579.9L500.9,576.3L500.5,572.0L502.0,569.9L505.3,568.3L507.9,565.5L511.2,562.1L514.5,560.0L515.6,557.1L517.8,556.4L520.0,556.2L523.3,555.0L526.2,555.0L527.3,558.1L528.6,560.2L530.4,562.1L531.7,565.1L531.9,569.2L534.1,570.1L537.2,567.8L538.9,569.0L539.4,572.4L540.2,575.4L541.1,578.7L541.1,582.1L540.5,585.4L540.5,587.7L542.0,589.4L543.5,591.0L544.9,593.2L545.7,596.5L547.1,598.7L549.3,600.7L551.9,602.4L553.4,602.2L553.0,599.8L551.7,597.6L551.7,595.4L550.4,592.8L549.0,591.6L547.5,590.1L545.5,589.4L544.2,586.6L542.7,584.8L542.4,582.1L543.8,579.2L544.2,576.5L545.3,575.4L546.4,576.0L546.4,577.4L549.0,578.3L550.8,580.3L551.9,581.9L554.1,582.3L554.8,583.7L554.8,586.3L556.1,585.4L558.5,583.7L559.6,582.3L561.8,581.4L564.0,579.9L564.6,577.6L564.6,574.7L563.8,571.3L562.2,569.4L560.2,567.6L558.5,565.5L556.9,563.2L556.9,560.9L558.7,559.3L560.7,557.6L562.4,556.7L564.4,556.9L565.7,557.4L565.5,559.5L566.8,559.7L567.3,557.6L569.5,556.9L572.8,555.7L574.1,554.1L575.6,554.8L578.3,554.1L580.9,552.6L583.8,550.0L586.6,547.6L587.5,545.4L589.0,542.9L590.4,540.7L592.1,537.9L592.6,536.1L590.1,535.4L592.3,533.8L592.3,532.0L590.4,529.5L588.8,525.8L586.6,523.1L588.6,520.4L591.5,518.2L593.9,517.1L591.5,516.0L589.3,515.5L586.4,517.1L585.5,514.9L583.1,512.7L585.5,511.5L587.7,509.2L590.4,506.9L592.8,507.5L591.5,510.7L590.8,512.7L593.7,510.7L597.4,509.5L599.1,510.7L599.8,513.5L598.7,514.9L602.2,516.3L602.0,519.0L602.4,521.8L602.0,524.2L604.6,524.2L607.5,523.1L608.8,521.0L608.8,517.7L606.8,514.1L604.6,511.2L605.7,509.2L609.0,506.9L609.7,504.0L611.7,502.5L614.5,500.1L617.8,501.0L622.2,497.4L625.1,492.8L628.8,487.0L632.8,479.8L633.2,474.6L635.2,470.4L634.8,466.4L632.1,463.8L627.7,463.8L625.5,461.9L622.2,461.1L625.1,458.8L627.7,454.1L633.2,448.0L637.6,443.0L643.1,442.1L649.7,442.5L655.9,441.7L660.7,443.0L665.1,441.7L669.5,432.7L676.1,431.4L682.7,428.5L683.1,431.8L680.5,437.7L676.1,443.0L672.8,448.0L669.0,452.1L666.4,458.1L666.4,465.6L667.5,471.1L668.8,474.6L670.6,472.8L672.3,470.4L673.2,467.5L676.1,465.6L676.1,461.9L679.8,460.0L680.0,456.1L682.7,455.3L683.3,450.1L682.2,448.0L683.8,443.8L687.1,439.5L691.5,437.7L698.1,439.5L702.5,435.0L709.0,428.1L720.0,415.6L720.0,373.3ZM311.9,477.7L315.2,477.0L317.8,475.6L321.1,475.6L325.1,475.3L327.5,473.9L326.2,472.8L328.2,468.9L325.1,467.5L324.8,465.6L324.0,463.8L321.8,461.5L320.9,458.1L319.6,456.1L317.4,456.1L318.9,454.1L320.4,450.1L316.7,449.3L315.6,449.7L317.7,445.3L313.4,445.5L312.3,448.9L311.7,452.1L312.3,455.3L312.3,458.4L313.8,457.7L313.4,460.7L316.7,460.4L317.1,463.0L317.8,464.5L317.8,466.4L314.7,466.4L314.3,468.2L315.4,470.0L313.0,471.4L315.2,472.5L317.8,473.2L316.7,473.9L314.5,474.6ZM302.4,472.5L305.7,472.1L310.3,470.4L311.2,466.4L312.1,461.9L310.8,459.2L307.9,458.8L305.7,461.5L302.4,463.0L302.9,466.4L303.5,468.9L301.8,470.7ZM348.6,457.3L351.9,455.7L352.1,457.7L351.2,460.0L349.0,459.2ZM345.9,458.1L347.9,458.1L347.9,459.6L346.4,459.6ZM364.2,451.7L365.7,448.4L366.4,448.9L365.5,451.3ZM351.7,514.9L354.1,514.3L358.7,514.1L357.8,517.7L357.6,518.5L355.2,517.4L351.9,516.0ZM342.4,506.7L344.6,505.6L345.9,507.8L345.5,511.5L344.0,512.4L342.9,511.5L342.9,507.8ZM343.3,502.2L345.1,500.4L345.4,503.1L344.6,505.2L343.5,504.0ZM376.1,521.8L378.3,522.0L382.2,522.6L380.4,523.2L376.3,522.6ZM395.4,523.1L396.9,522.0L400.5,521.2L399.1,523.1L396.9,524.2ZM329.7,510.4L331.4,509.4L332.1,510.1L331.0,511.2ZM375.0,512.4L377.6,514.6L378.5,514.9L376.1,512.4ZM432.8,631.9L434.7,638.6L433.9,640.9L433.0,644.4L431.7,650.2L429.5,657.3L427.7,662.1L424.4,663.3L421.1,662.1L420.5,658.2L419.6,654.9L421.8,650.2L421.1,645.5L422.0,641.4L426.2,640.2L429.5,637.5L431.0,635.0ZM500.2,583.7L502.9,586.6L504.4,589.4L503.5,591.4L501.3,592.3L500.0,591.0L499.6,587.2ZM441.6,577.4L444.2,577.4L444.2,578.1L441.8,578.1ZM533.9,593.0L538.7,593.9L541.3,596.9L545.3,600.5L547.9,601.6L551.2,604.2L552.6,607.5L554.1,609.5L557.4,611.9L557.2,614.8L556.9,618.1L554.3,618.1L549.3,614.1L546.4,610.8L544.9,607.5L542.0,604.2L541.3,601.6L538.0,598.3L534.3,594.7ZM555.6,620.3L557.4,618.3L559.6,618.4L562.9,619.6L567.3,620.5L568.4,619.4L572.1,620.5L572.8,622.0L576.1,622.5L575.9,624.3L572.1,623.8L566.2,622.9L561.8,622.5L558.3,621.6ZM564.0,602.0L565.3,600.9L568.4,601.6L569.3,599.4L572.8,598.3L575.0,595.2L578.3,593.2L580.9,590.1L583.1,591.2L586.4,593.6L584.0,595.8L582.9,596.1L583.5,599.4L586.0,603.1L583.5,603.5L582.7,606.4L580.5,608.6L580.0,611.5L579.4,613.2L576.3,614.3L572.8,612.3L570.1,613.0L566.6,611.7L566.2,608.6L564.2,606.0ZM586.8,617.4L588.8,617.4L589.0,613.7L589.9,611.2L591.0,612.6L591.7,615.6L594.3,615.9L593.4,612.6L591.9,609.5L595.4,607.3L591.5,607.3L588.8,607.3L588.6,604.4L591.5,604.2L595.4,604.4L598.1,604.2L599.6,602.0L597.0,603.1L593.7,603.1L590.4,602.7L588.6,603.5L587.7,605.3L587.7,607.1L586.6,608.6L585.5,611.2L586.6,613.0L587.1,615.2ZM612.3,607.1L615.6,606.2L618.9,607.1L620.0,610.8L622.2,612.6L624.4,610.1L627.7,608.8L633.7,611.0L637.6,612.3L642.0,613.7L644.9,616.7L647.5,618.5L649.3,619.2L647.9,620.7L650.1,624.0L653.0,626.5L655.9,628.1L653.0,628.1L647.9,626.3L645.3,623.4L642.0,622.3L639.8,623.8L638.7,625.6L635.4,625.4L629.9,623.2L627.7,623.6L629.5,620.7L627.7,617.4L623.3,615.4L618.9,613.9L616.7,614.1L616.3,611.9L614.5,611.5L618.5,610.4L615.2,610.1L612.3,608.4ZM589.5,563.9L593.0,564.2L593.2,567.4L591.7,570.1L591.7,573.5L594.3,574.2L597.0,574.7L597.0,577.4L594.8,575.8L592.6,575.1L590.4,574.9L589.5,573.8L590.1,572.9L588.8,572.4L587.9,569.2L588.8,568.3L589.0,566.2ZM592.6,589.9L594.8,586.3L598.7,586.3L600.2,583.7L602.4,587.7L602.0,591.2L599.8,592.8L597.0,591.0L597.0,588.8L595.4,588.8L593.2,590.1ZM597.6,577.6L599.8,577.6L600.7,580.5L599.1,582.8L598.7,583.2L597.8,581.0ZM593.4,581.7L595.9,581.2L595.2,585.2L593.9,584.6ZM592.6,579.0L595.0,579.9L593.9,582.1L592.6,581.9ZM589.0,575.4L591.2,575.8L591.2,578.1L590.1,578.1ZM582.0,586.8L583.8,584.8L586.6,581.9L587.3,580.3L586.4,581.0L583.8,583.7L582.0,585.9ZM591.5,547.8L592.6,548.5L591.5,552.1L590.1,555.7L588.6,553.8L588.4,551.9L589.9,549.5ZM563.3,562.1L565.1,560.4L567.7,560.2L568.4,561.4L566.8,563.9L565.1,564.6L563.3,563.9ZM609.5,527.6L612.1,526.0L613.9,526.8L614.5,528.9L613.2,532.6L611.7,533.6L610.6,532.6L610.6,529.7L609.5,529.2ZM615.4,527.1L616.7,525.8L619.4,524.7L620.5,526.3L619.4,527.6L616.7,529.2L615.6,528.4ZM612.1,525.8L613.4,524.2L616.3,521.8L618.9,521.5L622.2,521.5L623.3,520.4L624.9,518.0L626.2,516.3L626.0,518.2L628.8,516.8L630.6,514.3L631.7,511.5L632.1,509.2L632.1,507.2L632.8,505.8L635.2,505.2L635.4,507.8L636.5,510.7L635.4,514.1L634.3,514.9L634.3,517.7L633.4,519.6L633.9,521.2L632.8,522.8L631.7,523.4L631.7,521.8L630.4,522.6L629.5,524.2L628.2,524.2L625.5,524.2L625.1,525.0L624.0,526.0L622.9,527.2L621.3,525.8L621.8,524.2L618.9,524.2L615.6,525.0L612.3,525.9ZM632.1,504.9L632.8,502.5L631.7,501.6L633.0,499.5L635.0,499.5L635.9,495.9L635.9,493.1L638.7,495.6L641.6,497.4L643.8,496.5L644.2,499.5L640.9,500.7L639.4,503.4L636.5,501.9L634.3,501.9L633.9,504.0ZM636.5,462.6L638.7,465.6L639.4,471.1L639.2,478.1L642.0,481.4L638.7,482.1L638.5,488.0L639.8,490.2L637.6,489.0L636.5,491.2L636.5,486.4L636.7,481.4L636.5,474.6L635.9,470.0L636.1,465.6ZM575.4,654.4L578.3,652.0L581.6,651.6L586.0,650.2L590.4,649.2L593.0,646.0L593.0,643.2L595.9,643.9L596.1,641.6L599.1,639.3L603.1,636.1L606.2,638.2L609.0,638.2L609.7,635.2L611.9,632.8L615.9,630.7L621.1,632.3L625.1,632.3L623.3,635.2L622.2,638.2L624.4,640.5L627.7,642.5L631.0,644.4L633.9,644.4L635.4,640.9L635.6,636.4L636.1,633.0L637.6,628.9L639.4,631.9L640.5,637.1L643.8,638.6L644.2,642.1L645.3,645.5L647.5,648.5L651.5,650.9L653.0,654.9L655.9,658.0L659.6,661.6L660.9,664.5L661.8,669.9L660.7,675.7L659.6,680.1L657.0,684.3L655.2,688.8L654.1,693.5L653.9,694.3L649.7,695.4L646.0,698.5L643.1,696.8L642.0,695.7L639.8,697.9L635.4,696.5L632.8,695.1L631.5,691.6L629.9,689.1L628.2,689.1L628.8,687.0L627.9,685.4L626.8,687.8L625.3,688.0L626.6,684.8L627.3,681.1L625.1,684.3L623.1,687.2L621.6,683.5L619.4,681.7L617.8,679.8L613.4,678.3L607.9,678.8L603.5,680.1L600.2,681.4L597.0,682.7L595.9,684.6L592.6,684.6L588.2,684.8L583.8,687.5L579.4,687.0L577.4,685.6L577.2,683.8L578.7,679.6L577.4,675.7L576.3,671.4L575.0,668.2L573.9,664.5L574.3,660.9L573.9,657.3L574.5,655.6ZM684.9,650.4L688.2,652.5L691.5,655.6L690.4,655.8L687.1,653.9L684.7,651.1ZM650.4,617.6L654.1,616.3L657.4,614.5L659.2,614.8L658.5,617.0L655.2,619.0L651.9,619.0ZM655.9,611.0L658.5,612.6L660.7,615.4L660.0,615.6L657.4,612.8ZM619.4,618.1L620.7,617.6L620.5,620.3L619.4,619.8ZM555.6,609.0L557.6,608.8L558.9,611.7L557.4,611.5ZM410.6,618.1L411.2,619.0L410.8,619.4ZM419.4,630.7L420.0,631.0L419.8,631.6ZM445.9,652.3L447.0,652.7L446.6,653.3ZM450.6,650.4L451.4,650.6L451.0,651.3ZM152.5,548.0L153.6,550.5L154.1,550.2L153.2,548.0ZM153.2,544.4L154.7,544.6L155.2,545.4L154.5,546.3L154.1,545.4ZM644.2,498.0L646.4,496.2L645.7,495.9L644.0,497.1ZM647.5,495.3L651.5,492.8L650.8,492.5L647.3,494.6ZM653.0,491.8L655.2,490.6L654.8,490.2L652.8,491.4ZM665.5,477.7L667.5,475.6L666.8,475.3L665.3,477.0ZM664.2,617.2L666.8,619.4L667.1,620.5L665.1,619.4ZM668.4,620.1L670.6,621.6L670.1,622.0L668.4,620.7ZM672.8,622.0L675.6,623.8L675.2,624.3L672.6,622.7ZM675.2,625.8L677.8,626.3L677.6,627.2L675.4,626.9ZM677.4,623.8L679.2,626.5L678.5,626.7L677.2,624.5ZM678.9,628.1L681.1,628.9L680.5,629.3L678.9,628.5ZM690.6,638.2L691.9,639.3L691.2,640.0L690.4,639.1ZM691.9,640.9L693.2,641.8L692.6,642.3ZM694.1,644.6L695.0,645.1L694.3,645.2ZM576.1,623.4L578.7,623.6L577.8,624.7L576.1,624.0ZM579.4,623.6L580.9,623.8L580.5,624.9L579.4,624.7ZM581.1,623.8L586.0,623.6L586.0,624.7L581.6,625.2ZM587.9,623.8L594.8,623.6L594.3,624.7L588.2,624.8ZM586.0,626.0L589.9,627.2L589.3,628.1L586.0,626.9ZM595.9,628.1L599.1,625.6L604.0,623.8L602.4,625.2L598.1,627.8ZM600.9,622.7L603.1,622.0L602.9,622.7ZM604.6,606.0L605.5,603.1L604.9,600.9L606.2,602.0L607.3,602.7L606.2,604.2L607.3,604.6L606.0,606.0L606.4,607.3L605.3,606.2ZM601.3,612.3L604.0,612.6L603.5,613.7L601.6,613.2ZM605.7,611.7L609.0,611.5L611.9,612.8L609.7,613.0L606.2,612.8ZM528.2,575.4L528.8,575.6L528.6,579.6L527.9,579.4ZM530.4,589.2L530.8,589.7L530.6,590.3ZM287.3,540.4L288.8,539.9L288.1,541.0ZM289.7,540.9L290.6,541.0L290.2,541.8ZM292.7,539.7L293.8,539.4L293.2,540.9Z"/>
<path fill="#aad3df" d="M122.0,488.8L125.5,489.3L129.2,488.3L132.1,489.6L135.4,489.3L137.8,489.6L138.4,488.0L137.6,485.1L134.7,482.4L130.5,482.1L128.1,484.8L125.5,486.4ZM131.4,504.3L133.2,504.5L134.7,501.9L134.5,498.0L135.6,494.6L137.4,492.1L137.8,491.4L135.4,491.4L133.2,492.1L131.4,494.6L131.9,497.4L131.4,500.4ZM138.2,491.5L140.9,493.7L141.3,496.5L140.2,498.3L142.6,498.3L143.3,500.3L144.8,499.2L145.0,495.9L148.3,495.9L148.6,493.4L146.4,491.5L143.1,490.7L139.8,490.2ZM141.1,504.2L143.1,505.0L145.7,504.2L148.6,502.8L151.0,501.0L149.7,500.7L146.8,501.6L144.2,502.8L142.0,503.1ZM149.0,499.5L151.9,499.4L155.2,499.5L156.9,498.6L156.5,497.0L153.4,497.6L150.3,498.2ZM108.1,470.4L110.8,476.7L112.5,475.6L111.4,471.8L109.4,466.7L107.2,464.1L106.4,467.1ZM68.3,435.0L72.7,435.0L77.1,430.4L82.6,427.6L83.7,426.2L78.7,426.2L73.8,429.5L68.3,432.7ZM79.3,445.1L83.7,443.4L90.3,442.5L91.4,443.2L84.8,444.7ZM100.2,451.3L101.3,448.0L99.1,447.2L98.0,450.1ZM428.4,492.8L432.1,489.6L436.5,488.3L440.9,489.0L440.9,493.4L437.6,493.4L436.5,495.9L435.0,496.5L436.5,499.8L439.8,501.3L440.5,504.9L443.1,504.3L444.4,506.4L440.7,507.5L440.9,509.2L442.4,512.1L442.9,516.3L443.1,518.0L438.7,518.8L435.4,517.7L433.2,516.3L431.9,513.8L432.5,511.2L433.2,508.4L435.0,508.1L433.2,506.4L431.0,503.7L429.0,500.4L428.8,497.4L427.3,495.3ZM552.3,472.8L554.8,472.8L558.5,470.0L562.9,465.3L566.0,458.8L565.3,456.9L563.5,460.0L560.7,465.3L556.3,469.3ZM486.0,489.0L487.7,488.3L491.4,488.7L495.8,489.0L498.5,489.9L498.0,490.9L493.6,490.2L489.2,490.6L487.1,492.1L486.0,491.2ZM394.3,605.7L395.8,604.6L398.7,604.4L400.2,605.7L399.6,607.9L398.3,609.7L396.9,611.5L394.7,611.0L394.3,608.6ZM388.6,612.8L389.7,615.2L389.5,618.5L391.7,621.8L393.0,624.5L391.9,624.3L389.5,620.7L388.6,617.4ZM399.1,626.3L400.5,628.5L400.5,631.9L401.8,635.2L401.8,637.3L400.5,636.4L399.6,631.9L398.9,628.5ZM391.4,439.5L393.6,439.5L396.7,436.8L396.5,434.1L392.5,431.8L390.3,434.6ZM400.2,435.0L403.5,435.0L403.5,429.5L400.9,427.6ZM351.9,445.9L354.1,445.9L355.2,443.0L353.0,442.5ZM491.9,502.2L496.3,502.8L496.3,501.3L492.8,501.3ZM614.5,495.6L616.3,495.6L616.3,493.7L614.5,493.7ZM170.5,639.8L172.1,640.0L173.2,641.8L171.6,641.4ZM452.5,491.5L453.2,495.6L454.5,495.9L454.3,492.5ZM456.9,489.0L458.9,488.7L460.0,490.2L457.8,490.9Z"/>
<g fill="#aad3df" opacity=".8"><ellipse cx="90.0" cy="470.9" rx="0.9" ry="0.3" transform="rotate(137 90.0 470.9)"/><ellipse cx="175.0" cy="467.8" rx="0.5" ry="0.5" transform="rotate(61 175.0 467.8)"/><ellipse cx="163.0" cy="472.2" rx="0.6" ry="0.6" transform="rotate(15 163.0 472.2)"/><ellipse cx="167.6" cy="464.1" rx="0.5" ry="0.4" transform="rotate(78 167.6 464.1)"/><ellipse cx="70.3" cy="473.5" rx="0.9" ry="0.6" transform="rotate(158 70.3 473.5)"/><ellipse cx="72.9" cy="443.0" rx="0.7" ry="0.5" transform="rotate(149 72.9 443.0)"/><ellipse cx="177.0" cy="460.4" rx="0.6" ry="0.4" transform="rotate(62 177.0 460.4)"/><ellipse cx="108.2" cy="447.1" rx="0.5" ry="0.6" transform="rotate(42 108.2 447.1)"/><ellipse cx="114.0" cy="476.2" rx="0.9" ry="0.7" transform="rotate(146 114.0 476.2)"/><ellipse cx="157.5" cy="434.8" rx="0.6" ry="0.5" transform="rotate(127 157.5 434.8)"/><ellipse cx="164.9" cy="426.9" rx="0.7" ry="0.6" transform="rotate(15 164.9 426.9)"/><ellipse cx="107.7" cy="440.9" rx="1.0" ry="0.5" transform="rotate(118 107.7 440.9)"/><ellipse cx="94.6" cy="447.0" rx="0.7" ry="0.4" transform="rotate(73 94.6 447.0)"/><ellipse cx="61.8" cy="466.2" rx="0.7" ry="0.7" transform="rotate(20 61.8 466.2)"/><ellipse cx="67.2" cy="458.4" rx="0.6" ry="0.4" transform="rotate(110 67.2 458.4)"/><ellipse cx="168.4" cy="464.7" rx="0.7" ry="0.5" transform="rotate(97 168.4 464.7)"/><ellipse cx="182.0" cy="470.9" rx="0.5" ry="0.4" transform="rotate(59 182.0 470.9)"/><ellipse cx="44.8" cy="434.0" rx="0.5" ry="0.4" transform="rotate(37 44.8 434.0)"/><ellipse cx="103.8" cy="460.0" rx="0.8" ry="0.8" transform="rotate(176 103.8 460.0)"/><ellipse cx="167.7" cy="426.5" rx="0.9" ry="0.7" transform="rotate(116 167.7 426.5)"/><ellipse cx="173.5" cy="437.1" rx="1.0" ry="0.7" transform="rotate(100 173.5 437.1)"/><ellipse cx="100.8" cy="458.7" rx="0.7" ry="0.5" transform="rotate(48 100.8 458.7)"/><ellipse cx="66.6" cy="461.5" rx="0.4" ry="0.3" transform="rotate(38 66.6 461.5)"/><ellipse cx="132.1" cy="474.8" rx="0.5" ry="0.5" transform="rotate(162 132.1 474.8)"/><ellipse cx="79.7" cy="461.2" rx="0.7" ry="0.4" transform="rotate(124 79.7 461.2)"/><ellipse cx="187.1" cy="455.0" rx="0.7" ry="0.3" transform="rotate(26 187.1 455.0)"/><ellipse cx="112.5" cy="442.4" rx="0.8" ry="0.4" transform="rotate(135 112.5 442.4)"/><ellipse cx="95.5" cy="442.5" rx="1.0" ry="0.7" transform="rotate(76 95.5 442.5)"/><ellipse cx="185.0" cy="432.0" rx="0.9" ry="0.4" transform="rotate(93 185.0 432.0)"/><ellipse cx="174.8" cy="460.7" rx="0.6" ry="0.6" transform="rotate(128 174.8 460.7)"/><ellipse cx="90.9" cy="467.4" rx="1.0" ry="0.8" transform="rotate(49 90.9 467.4)"/><ellipse cx="160.0" cy="434.8" rx="0.9" ry="0.4" transform="rotate(132 160.0 434.8)"/><ellipse cx="186.6" cy="436.5" rx="0.7" ry="0.4" transform="rotate(154 186.6 436.5)"/><ellipse cx="181.8" cy="456.0" rx="1.1" ry="0.8" transform="rotate(93 181.8 456.0)"/><ellipse cx="111.2" cy="461.7" rx="0.7" ry="0.8" transform="rotate(156 111.2 461.7)"/><ellipse cx="165.0" cy="454.2" rx="0.9" ry="0.7" transform="rotate(21 165.0 454.2)"/><ellipse cx="164.1" cy="472.4" rx="0.7" ry="0.7" transform="rotate(51 164.1 472.4)"/><ellipse cx="112.4" cy="469.6" rx="1.0" ry="0.5" transform="rotate(101 112.4 469.6)"/><ellipse cx="110.2" cy="439.3" rx="0.5" ry="0.4" transform="rotate(32 110.2 439.3)"/><ellipse cx="110.6" cy="444.4" rx="0.8" ry="0.6" transform="rotate(121 110.6 444.4)"/><ellipse cx="45.1" cy="425.1" rx="0.9" ry="0.6" transform="rotate(35 45.1 425.1)"/><ellipse cx="106.0" cy="431.5" rx="1.0" ry="0.4" transform="rotate(64 106.0 431.5)"/><ellipse cx="73.9" cy="453.1" rx="0.9" ry="0.5" transform="rotate(139 73.9 453.1)"/><ellipse cx="103.8" cy="471.9" rx="1.0" ry="0.5" transform="rotate(117 103.8 471.9)"/><ellipse cx="170.5" cy="471.9" rx="0.5" ry="0.6" transform="rotate(112 170.5 471.9)"/><ellipse cx="63.6" cy="446.5" rx="0.5" ry="0.3" transform="rotate(174 63.6 446.5)"/><ellipse cx="83.2" cy="437.6" rx="0.8" ry="0.6" transform="rotate(16 83.2 437.6)"/><ellipse cx="107.4" cy="446.9" rx="0.8" ry="0.6" transform="rotate(177 107.4 446.9)"/><ellipse cx="83.3" cy="452.7" rx="1.0" ry="0.6" transform="rotate(63 83.3 452.7)"/><ellipse cx="179.7" cy="465.6" rx="0.8" ry="0.8" transform="rotate(114 179.7 465.6)"/><ellipse cx="62.9" cy="472.3" rx="0.7" ry="0.3" transform="rotate(61 62.9 472.3)"/><ellipse cx="105.2" cy="467.9" rx="0.6" ry="0.4" transform="rotate(39 105.2 467.9)"/><ellipse cx="179.3" cy="445.2" rx="0.7" ry="0.4" transform="rotate(35 179.3 445.2)"/><ellipse cx="183.4" cy="467.6" rx="1.1" ry="0.5" transform="rotate(124 183.4 467.6)"/><ellipse cx="66.7" cy="443.8" rx="0.6" ry="0.7" transform="rotate(131 66.7 443.8)"/><ellipse cx="101.6" cy="457.3" rx="0.6" ry="0.3" transform="rotate(93 101.6 457.3)"/><ellipse cx="107.0" cy="477.2" rx="0.6" ry="0.6" transform="rotate(131 107.0 477.2)"/><ellipse cx="176.3" cy="467.1" rx="1.0" ry="0.3" transform="rotate(69 176.3 467.1)"/><ellipse cx="48.8" cy="437.2" rx="0.6" ry="0.4" transform="rotate(108 48.8 437.2)"/><ellipse cx="166.3" cy="443.3" rx="1.1" ry="0.5" transform="rotate(137 166.3 443.3)"/><ellipse cx="176.4" cy="449.3" rx="0.9" ry="0.3" transform="rotate(14 176.4 449.3)"/><ellipse cx="159.1" cy="469.4" rx="1.0" ry="0.4" transform="rotate(4 159.1 469.4)"/><ellipse cx="55.2" cy="432.5" rx="0.4" ry="0.7" transform="rotate(116 55.2 432.5)"/><ellipse cx="44.7" cy="423.6" rx="0.7" ry="0.8" transform="rotate(159 44.7 423.6)"/><ellipse cx="61.8" cy="451.7" rx="0.6" ry="0.4" transform="rotate(41 61.8 451.7)"/><ellipse cx="81.0" cy="469.5" rx="1.1" ry="0.6" transform="rotate(135 81.0 469.5)"/><ellipse cx="93.4" cy="477.2" rx="0.6" ry="0.3" transform="rotate(129 93.4 477.2)"/><ellipse cx="111.9" cy="427.5" rx="0.5" ry="0.7" transform="rotate(110 111.9 427.5)"/><ellipse cx="172.0" cy="425.2" rx="0.6" ry="0.4" transform="rotate(58 172.0 425.2)"/><ellipse cx="92.8" cy="434.0" rx="0.9" ry="0.6" transform="rotate(103 92.8 434.0)"/><ellipse cx="186.6" cy="424.4" rx="1.0" ry="0.3" transform="rotate(160 186.6 424.4)"/><ellipse cx="66.7" cy="474.1" rx="1.0" ry="0.7" transform="rotate(171 66.7 474.1)"/><ellipse cx="183.9" cy="447.7" rx="0.9" ry="0.3" transform="rotate(47 183.9 447.7)"/><ellipse cx="65.9" cy="456.0" rx="0.6" ry="0.8" transform="rotate(140 65.9 456.0)"/><ellipse cx="90.0" cy="476.5" rx="1.0" ry="0.4" transform="rotate(46 90.0 476.5)"/><ellipse cx="111.9" cy="453.0" rx="0.5" ry="0.6" transform="rotate(1 111.9 453.0)"/><ellipse cx="56.2" cy="434.9" rx="0.5" ry="0.6" transform="rotate(100 56.2 434.9)"/><ellipse cx="76.8" cy="448.4" rx="0.8" ry="0.7" transform="rotate(168 76.8 448.4)"/><ellipse cx="172.6" cy="436.9" rx="0.8" ry="0.7" transform="rotate(126 172.6 436.9)"/><ellipse cx="64.7" cy="440.5" rx="0.9" ry="0.3" transform="rotate(131 64.7 440.5)"/><ellipse cx="160.9" cy="471.5" rx="0.8" ry="0.6" transform="rotate(4 160.9 471.5)"/><ellipse cx="162.9" cy="448.5" rx="1.0" ry="0.6" transform="rotate(177 162.9 448.5)"/><ellipse cx="49.1" cy="445.5" rx="1.1" ry="0.5" transform="rotate(115 49.1 445.5)"/><ellipse cx="114.0" cy="477.9" rx="1.0" ry="0.7" transform="rotate(128 114.0 477.9)"/><ellipse cx="173.3" cy="473.8" rx="0.8" ry="0.7" transform="rotate(121 173.3 473.8)"/><ellipse cx="79.6" cy="474.6" rx="0.6" ry="0.7" transform="rotate(52 79.6 474.6)"/><ellipse cx="76.5" cy="444.8" rx="0.7" ry="0.7" transform="rotate(19 76.5 444.8)"/><ellipse cx="112.5" cy="442.8" rx="0.9" ry="0.6" transform="rotate(164 112.5 442.8)"/><ellipse cx="71.8" cy="447.6" rx="0.6" ry="0.6" transform="rotate(177 71.8 447.6)"/><ellipse cx="87.2" cy="449.4" rx="0.4" ry="0.3" transform="rotate(68 87.2 449.4)"/><ellipse cx="74.6" cy="453.7" rx="0.9" ry="0.4" transform="rotate(119 74.6 453.7)"/><ellipse cx="110.7" cy="472.5" rx="1.0" ry="0.4" transform="rotate(21 110.7 472.5)"/><ellipse cx="178.9" cy="477.2" rx="0.7" ry="0.7" transform="rotate(115 178.9 477.2)"/><ellipse cx="187.2" cy="459.1" rx="1.0" ry="0.8" transform="rotate(19 187.2 459.1)"/><ellipse cx="62.3" cy="434.7" rx="0.8" ry="0.7" transform="rotate(180 62.3 434.7)"/><ellipse cx="96.0" cy="453.2" rx="1.0" ry="0.5" transform="rotate(40 96.0 453.2)"/><ellipse cx="108.4" cy="463.5" rx="0.5" ry="0.5" transform="rotate(80 108.4 463.5)"/><ellipse cx="90.1" cy="461.6" rx="0.7" ry="0.8" transform="rotate(50 90.1 461.6)"/><ellipse cx="85.1" cy="459.9" rx="0.7" ry="0.8" transform="rotate(150 85.1 459.9)"/><ellipse cx="54.1" cy="428.1" rx="0.9" ry="0.7" transform="rotate(71 54.1 428.1)"/><ellipse cx="57.8" cy="433.8" rx="0.6" ry="0.8" transform="rotate(63 57.8 433.8)"/><ellipse cx="183.9" cy="456.5" rx="0.6" ry="0.7" transform="rotate(109 183.9 456.5)"/><ellipse cx="400.0" cy="424.0" rx="0.7" ry="0.6"/><ellipse cx="401.7" cy="428.4" rx="0.7" ry="0.3"/><ellipse cx="395.3" cy="430.1" rx="0.8" ry="0.5"/><ellipse cx="381.6" cy="436.5" rx="0.9" ry="0.3"/><ellipse cx="387.3" cy="431.8" rx="0.5" ry="0.5"/><ellipse cx="402.8" cy="433.2" rx="0.7" ry="0.4"/><ellipse cx="389.9" cy="431.0" rx="0.4" ry="0.3"/><ellipse cx="379.2" cy="422.4" rx="0.6" ry="0.4"/><ellipse cx="400.6" cy="420.8" rx="0.6" ry="0.3"/><ellipse cx="378.7" cy="435.9" rx="0.5" ry="0.3"/><ellipse cx="380.1" cy="433.2" rx="0.6" ry="0.6"/><ellipse cx="395.8" cy="430.7" rx="0.5" ry="0.5"/><ellipse cx="384.4" cy="431.9" rx="0.3" ry="0.4"/><ellipse cx="402.5" cy="435.3" rx="0.6" ry="0.5"/><ellipse cx="399.3" cy="433.9" rx="0.5" ry="0.4"/><ellipse cx="385.1" cy="430.1" rx="0.9" ry="0.6"/><ellipse cx="399.6" cy="436.9" rx="0.3" ry="0.5"/><ellipse cx="400.3" cy="429.7" rx="0.7" ry="0.3"/><ellipse cx="384.8" cy="422.0" rx="0.8" ry="0.6"/><ellipse cx="402.7" cy="433.3" rx="0.4" ry="0.3"/><ellipse cx="388.8" cy="426.2" rx="0.9" ry="0.5"/><ellipse cx="392.7" cy="424.8" rx="0.6" ry="0.5"/><ellipse cx="374.0" cy="424.5" rx="0.4" ry="0.6"/><ellipse cx="392.6" cy="432.5" rx="0.4" ry="0.4"/><ellipse cx="392.3" cy="425.9" rx="0.4" ry="0.3"/><ellipse cx="388.9" cy="427.9" rx="0.5" ry="0.4"/><ellipse cx="391.3" cy="437.1" rx="0.5" ry="0.4"/><ellipse cx="402.3" cy="426.8" rx="0.8" ry="0.4"/><ellipse cx="380.0" cy="433.4" rx="0.9" ry="0.5"/><ellipse cx="382.2" cy="436.9" rx="0.6" ry="0.5"/><ellipse cx="385.7" cy="433.2" rx="0.7" ry="0.6"/><ellipse cx="379.7" cy="436.7" rx="0.5" ry="0.4"/><ellipse cx="393.8" cy="434.2" rx="0.8" ry="0.5"/><ellipse cx="388.3" cy="434.0" rx="0.9" ry="0.4"/><ellipse cx="398.0" cy="433.6" rx="0.4" ry="0.5"/><ellipse cx="381.8" cy="421.6" rx="0.6" ry="0.4"/><ellipse cx="379.6" cy="430.6" rx="0.7" ry="0.6"/><ellipse cx="377.3" cy="431.0" rx="0.4" ry="0.6"/><ellipse cx="377.1" cy="436.5" rx="0.3" ry="0.4"/><ellipse cx="400.4" cy="422.8" rx="0.7" ry="0.6"/></g>
<path fill="none" stroke="#c9b4cf" stroke-width=".45" opacity=".8" d="M53.6,481.4L115.2,481.4L116.5,482.4L122.2,483.8L127.7,484.8L130.1,483.8L138.0,488.7L138.7,489.9L140.9,491.2L143.1,493.4L143.3,500.4L141.7,503.1L146.4,502.8L150.8,501.0L150.5,499.2L153.0,498.6L155.6,498.6L156.7,496.8L159.5,494.3L167.2,494.3L168.8,493.1L169.9,490.6L170.5,489.0L172.3,486.7L174.3,487.0L175.4,487.7L175.4,492.1L176.3,493.7L177.1,494.6M67.0,529.7L72.3,529.2L80.4,532.8L86.6,532.8L86.6,531.5L90.3,531.5L94.7,537.2L97.6,538.7L99.3,536.6L101.5,536.6L103.9,540.4L105.7,542.4L106.6,545.1L110.8,546.3M121.7,573.1L121.7,571.3L122.8,569.4L125.7,569.4L125.7,568.8L123.5,566.9L124.4,565.5L128.3,565.5L128.3,569.9L129.0,569.9M128.3,565.5L130.3,563.9M128.3,569.9L128.3,573.3L126.4,574.8M128.3,573.3L129.9,574.5L131.4,575.6M132.5,576.5L133.8,575.8L135.4,574.5L137.6,572.9L139.8,572.6L141.5,572.0M136.0,580.8L138.2,581.0L140.4,581.2M142.2,587.4L142.8,584.3M167.6,579.2L164.2,582.3L165.0,585.4L165.3,589.0L170.3,589.9L171.9,591.9L176.0,591.6L175.4,595.8L176.5,600.5L177.4,602.7M177.4,602.7L171.0,602.9L170.8,606.4L171.9,607.7L170.8,614.5M170.8,614.5L169.0,613.7L166.1,610.8L162.8,608.6L159.1,605.5L156.3,604.6L154.1,603.8L151.0,602.4M159.1,605.5L158.9,607.4L155.8,611.0L152.5,612.8L152.1,615.2L149.7,616.3L147.9,615.0L147.9,612.8M192.7,586.8L189.7,590.5L191.0,593.9L186.6,596.5L183.3,596.3L183.7,599.8L185.0,600.5L180.4,603.3L177.4,602.7M191.0,593.9L192.5,594.3L193.2,595.6L192.7,600.2L194.7,602.4L196.9,602.0L200.2,601.1L204.4,600.2L208.1,600.5L210.8,596.1M198.7,592.3L198.5,593.6L196.9,596.5L200.2,601.1M205.7,592.5L204.8,594.5L204.4,600.2M170.8,614.5L164.2,616.7L162.0,621.6L164.2,625.4L165.7,627.4L169.2,626.3L169.2,629.6L171.4,629.5L173.4,633.0L172.7,635.2L172.7,639.3L171.6,641.4L171.6,644.4L169.9,646.2M171.4,629.5L174.3,629.6L178.0,627.2L180.9,626.9L180.9,631.2L182.8,633.0L186.4,634.1L188.6,635.2L191.4,635.9L192.3,641.4L196.0,641.6L196.3,644.1L198.0,646.0L197.4,648.1L196.5,649.7L196.5,650.6L197.1,655.1L201.8,655.6L202.6,659.7L205.0,659.7L204.4,663.3L206.4,665.2L206.1,667.4L202.0,670.2L197.8,675.0L201.3,676.5L205.7,679.3L207.5,681.4L207.0,684.0M196.5,650.6L194.5,648.5L188.8,649.2L186.8,655.6L183.1,656.8L181.1,655.1L178.7,654.4L176.7,656.8L175.4,656.8L174.5,653.7L174.1,652.3L173.0,647.8L171.6,644.4M176.7,656.8L176.5,659.7L173.8,661.6L174.3,666.7L171.2,670.7L170.5,675.5L169.7,678.3L170.5,683.0L171.0,685.6L169.7,688.8L168.3,691.6L168.3,697.1L166.8,701.4M186.8,655.6L190.3,659.2L194.7,661.3L197.8,663.0L195.6,667.4L200.2,667.9L202.2,667.4L204.4,663.3M197.8,675.0L196.7,679.6L196.0,684.8M319.6,522.8L320.7,527.1L321.8,530.5L316.5,532.0L316.3,533.8L312.8,536.4L305.3,539.4L305.3,542.9L305.3,546.1L298.0,546.1L298.0,552.3L295.8,553.3L295.8,557.3L287.0,557.3M305.3,542.0L295.4,542.0M305.3,542.9L313.8,548.5L326.8,557.9L327.0,558.8L331.4,560.9L331.7,562.8L333.6,562.5L337.1,561.6L350.8,552.1L349.7,550.2L347.0,549.7L345.1,545.6L346.2,543.6L345.9,538.7L345.3,535.6L344.4,530.8L340.9,526.3L342.4,523.9L342.9,518.0M345.3,535.6L347.0,531.8L349.7,530.0L349.7,528.0M313.8,548.5L310.1,548.5L312.3,570.8L304.0,570.8L300.9,571.0L299.1,570.6L297.6,572.4L293.6,568.3L288.1,569.4M379.7,531.9L379.3,538.2L379.3,555.7L379.3,560.4L377.2,560.4L377.2,561.6L359.6,552.3L357.4,553.3L355.6,554.3L350.8,552.1M379.3,555.7L405.5,555.7M357.4,553.3L358.5,558.1L359.3,559.5L358.5,567.6L354.1,573.1L354.3,574.9M377.2,561.6L377.2,570.4L374.7,570.8L372.8,576.5L373.9,581.0L374.7,581.2L376.5,586.1L379.8,588.1L384.6,594.1M333.6,562.5L333.6,567.6L332.1,571.0L326.6,572.2L324.8,572.2L322.9,571.7L320.0,573.8L317.8,574.9L314.7,577.2L312.3,582.3M332.3,579.4L333.4,575.4L339.6,576.5L343.5,576.7L346.4,575.8L351.9,576.3L354.3,574.9L355.6,577.8L353.6,583.2L350.8,587.7L349.2,591.0L346.4,590.1L343.3,594.7M332.3,579.4L330.6,585.4L330.3,591.2M327.9,591.6L327.5,584.8L326.4,581.0L324.2,580.8L318.2,581.0L318.2,584.3L318.5,587.7L317.4,590.3L318.0,594.1M374.7,581.2L370.6,584.3L366.4,585.4L365.3,587.7L358.5,588.8L356.5,591.6L356.5,594.5L360.0,600.5L353.6,600.5L349.2,600.5L349.2,603.1L345.9,603.1M360.0,600.5L363.5,604.6L363.3,606.6L360.0,609.7L359.6,613.0L356.1,615.9L353.2,615.4L351.2,618.1M384.6,594.1L379.3,594.3L373.9,596.3L367.3,594.1L365.3,595.8L365.3,597.6L363.5,604.6M384.6,594.1L389.2,595.6L392.3,597.6M353.2,615.4L352.5,615.0L349.0,614.1M351.4,618.5L353.6,618.3L360.9,618.3L361.8,621.4L367.3,622.7L372.3,621.4L372.5,626.3L373.4,630.1L377.2,629.4L377.2,634.1L372.8,634.1L372.8,641.4L375.8,644.6L371.4,645.5L365.1,644.1L355.0,644.1L350.3,643.7M377.2,629.4L380.0,630.1L384.6,632.3L388.1,635.0L389.9,635.0L389.9,632.3L386.8,631.9L387.3,625.8L392.1,623.6L389.0,618.5L388.6,612.8L388.6,608.6L389.5,608.4L389.7,603.5L392.3,597.6M370.6,646.2L370.6,654.9L368.4,654.9L368.4,661.6L368.4,670.4L362.6,671.2L360.7,670.9M368.4,661.6L372.8,666.2L379.3,663.8L383.3,660.4L389.0,655.4L393.2,655.8L394.7,660.9L394.5,664.3L396.7,666.6M380.0,645.1L383.7,645.5L389.0,655.4M380.0,645.1L383.7,645.3L387.9,640.7L391.2,640.0L391.2,638.6L396.9,636.4L396.3,635.5L397.4,633.2L397.6,626.3L396.5,625.8L392.1,623.6M391.2,640.0L396.7,642.5L396.9,649.7L395.8,653.2L393.2,655.8M399.1,626.3L400.2,631.0L406.8,631.2L413.2,628.3M389.5,608.4L391.4,607.6L398.9,607.5L407.3,612.1L410.6,615.6M398.9,607.5L399.1,604.9L400.2,602.9L401.3,601.1L399.1,596.1L403.3,595.2L405.5,595.6L408.1,597.4L411.2,597.8L414.5,596.7L416.5,596.7L414.5,599.1L414.5,607.3L415.8,609.0M392.3,597.6L394.7,597.4L399.1,596.1M399.1,596.1L399.4,592.1L396.9,588.1L399.4,586.3L399.4,583.2L403.3,577.2L404.6,573.5L405.5,569.0L409.2,565.1M404.6,573.5L407.9,572.6L412.3,573.1L417.6,577.6L419.1,577.2M416.5,596.7L423.3,594.3L429.9,587.7L427.7,587.7L418.9,584.8L418.5,581.2L416.3,581.0L417.6,577.6M429.9,587.7L432.1,585.4L432.1,580.3M385.9,437.3L390.3,430.4L393.6,425.7L390.1,422.2M384.6,450.1L386.2,455.3L392.3,457.7L394.3,470.7L400.0,471.8L402.6,476.7L407.9,478.4L412.5,479.4L411.9,485.1L408.4,487.7M426.6,483.4L428.4,477.0L431.4,476.0L436.1,472.1L445.3,474.9L453.2,474.6L459.6,475.3L458.5,467.8L458.9,463.8L467.3,462.3L474.3,459.2L480.0,458.8L486.4,463.8L492.5,463.0L495.6,466.4L500.2,475.3L507.7,474.6L511.7,479.4L516.3,481.1M516.3,481.1L521.6,479.1L527.3,475.3L538.3,479.1L540.5,476.3L541.8,470.7L549.0,473.5L549.3,476.0L558.9,477.0L563.1,480.4L573.2,478.7L580.9,478.7L587.9,489.0L582.4,489.3L578.7,492.8L570.4,494.3L569.3,498.9L555.2,504.6L544.2,501.6L536.3,501.3L524.4,493.7L523.8,486.4L517.4,480.8M580.9,478.7L586.6,477.7L588.4,468.9L596.1,465.6L604.6,478.7L611.7,481.8L620.5,483.8L617.0,494.0L613.0,494.6L611.7,502.5M516.3,481.1L513.0,483.4L506.8,487.4L505.3,492.8L500.5,494.3L502.0,499.8L500.7,503.4L493.4,506.4L486.2,510.7L489.0,517.1L495.4,521.8L497.4,529.5L502.4,535.6L509.3,540.4L518.0,541.4L519.6,542.9L526.0,541.7L533.2,538.2L538.3,540.7L541.3,542.4L538.7,549.3L541.3,550.7L542.4,555.5L546.8,557.6L548.8,554.8L555.8,552.6L558.9,553.8L561.8,556.9M500.7,503.4L486.0,502.2L480.5,502.5L478.7,506.4L470.6,506.4L469.5,500.7L460.7,498.9L453.2,492.5L447.5,494.3L447.5,505.5L444.6,503.4L439.8,504.0M470.6,506.4L473.6,512.1L470.6,516.6L466.8,517.4L461.3,522.3L458.9,518.8L453.6,515.7L450.1,514.1L444.9,516.6L442.9,516.8M458.9,518.8L457.4,526.6L458.3,532.3L460.2,534.1L458.3,536.6L461.8,537.7L463.3,543.2L459.8,548.0M458.3,536.6L470.1,536.4L471.0,533.1L476.7,531.3L478.3,527.6L480.7,525.5L481.8,519.3L489.0,517.1M470.6,516.6L478.3,516.0L481.8,518.5L489.0,517.1M474.3,551.7L480.7,550.0L478.3,542.2L484.6,538.7L488.2,533.3L490.1,530.2L487.1,527.9L487.7,523.6L495.4,521.8M518.0,541.4L518.0,545.1L500.5,539.2L502.4,535.6M519.6,542.9L521.8,544.4L526.6,543.9L526.0,541.7M517.8,556.4L519.6,550.2L518.0,545.1L521.8,546.1L527.5,548.5L524.9,552.1L527.9,557.4L527.3,558.8M527.9,557.4L529.5,550.9L532.6,547.3L537.6,541.9L538.3,540.7M542.4,555.5L544.4,559.7L539.4,563.9L541.8,568.8L540.2,572.0L542.4,578.7L541.3,582.8M544.4,559.7L546.8,557.6M544.4,559.7L548.8,561.6L547.1,565.8L553.0,564.4L556.5,570.4L555.6,573.5L560.7,572.6L560.5,578.1L556.9,579.6L557.8,581.4L553.9,582.3M555.6,573.5L549.7,573.5L549.3,575.1L550.6,579.4M553.0,564.4L552.8,562.1L555.6,560.7L554.3,559.0L548.8,554.8M560.7,572.6L560.9,569.7L555.6,564.6L553.0,564.4M422.9,517.1L421.8,511.0L422.9,510.1L430.6,511.0L431.2,513.8M422.9,517.1L417.6,517.4L409.7,518.5L405.1,518.2L404.0,521.0M422.9,517.1L425.5,521.0L424.2,525.8L425.7,528.1L429.2,531.0L429.2,533.6L431.2,536.1M417.6,517.4L415.0,523.6L409.7,527.4L410.6,530.5L413.2,531.3L416.9,533.3L422.7,538.2L426.6,538.4L429.2,535.9M409.7,527.4L405.3,530.2L402.6,529.2L402.6,527.6L404.8,525.2L403.5,524.2M410.6,530.5L405.7,532.3L407.9,534.9L406.8,536.1L403.5,538.2L401.3,537.7M426.6,538.4L428.8,539.9L430.8,539.9M440.0,550.5L445.7,554.1L446.8,555.7L445.3,560.4L438.7,562.8L432.3,563.7L430.3,564.6L428.8,567.2L427.7,567.6L426.2,566.9L419.8,566.2L419.4,568.1L418.5,568.8M446.8,555.7L448.4,548.8M438.7,562.8L441.1,568.3M399.6,532.8L401.1,537.4M382.4,504.3L385.9,503.4M382.2,506.7L382.4,504.3L374.7,505.5L370.6,506.9L369.7,509.2L368.4,510.1"/>
<g font-family="'Liberation Sans','DejaVu Sans','Noto Sans CJK SC',sans-serif" font-size="4.3" fill="#8d6aa6" text-anchor="middle">
<text x="99.7" y="428.2">Canada</text>
<text x="106.3" y="519.4">United States</text>
<text x="160" y="595.9">Colombia</text>
<text x="156" y="629.4">Perú</text>
<text x="183" y="642.9">Bolivia</text>
<text x="214" y="638.4">Brasil</text>
<text x="195" y="657.4">Paraguay</text>
<text x="195" y="661.9">Paraguái</text>
<text x="164" y="693.9">Chile</text>
<text x="180" y="697.4">Argentina</text>
<text x="326" y="537.4">Algérie</text>
<text x="326" y="541.9">ⵍⵣⵣⴰⵢⴻⵔ</text>
<text x="326" y="546.4">الجزائر</text>
<text x="362.4" y="546.4">ليبيا</text>
<text x="389.6" y="545.2">مصر</text>
<text x="299.7" y="559.7">موريتانيا</text>
<text x="322.6" y="566.7">Mali</text>
<text x="346" y="566.7">Niger</text>
<text x="365.8" y="572.2">Tchad تشاد</text>
<text x="390.5" y="572.2">السودان</text>
<text x="342" y="586.8">Nigeria</text>
<text x="370.2" y="585.0">Ködörösêse</text>
<text x="370.2" y="589.6">tî Bêafrîka /</text>
<text x="370.2" y="594.2">République</text>
<text x="370.2" y="598.8">centrafricaine</text>
<text x="405.3" y="586.9">ኢትዮጵያ</text>
<text x="428.5" y="593.2">Soomaaliya</text>
<text x="428.5" y="597.7">الصومال</text>
<text x="406.6" y="607.2">Kenya</text>
<text x="374.8" y="611.0">République</text>
<text x="374.8" y="615.7">démocratique</text>
<text x="374.8" y="620.4">du Congo</text>
<text x="402.8" y="620.6">Tanzania</text>
<text x="365.9" y="633.4">Angola</text>
<text x="401.5" y="648.6">Moçambique</text>
<text x="362.6" y="658.8">Namibia</text>
<text x="380" y="672.5">South Africa</text>
<text x="529.9" y="434.3">Россия</text>
<text x="399.7" y="485.0">Україна</text>
<text x="471" y="486.1">Қазақстан</text>
<text x="464" y="506.1">Oʻzbekiston</text>
<text x="454.5" y="513.4">Türkmenistan</text>
<text x="467.4" y="527.1">افغانستان</text>
<text x="443.6" y="531.6">ایران</text>
<text x="419.9" y="528.7">العراق</text>
<text x="478.7" y="536.6">پاکستان</text>
<text x="424.4" y="551.3">السعودية</text>
<text x="451.5" y="559.2">عمان</text>
<text x="429" y="571.3">اليمن</text>
<text x="499" y="557.4">India</text>
<text x="557.6" y="483.4">Монгол улс</text>
<text x="557.6" y="489.2">ᠮᠣᠩᠭᠣᠯ</text>
<text x="557.6" y="495.0">ᠤᠯᠤᠰ</text>
<text x="562.5" y="571.8">Việt Nam</text>
<text x="594" y="576.6">Pilipinas</text>
<text x="585.1" y="597.5">Malaysia</text>
<text x="589.8" y="611.9">Indonesia</text>
<text x="646.3" y="620.3">Papua Niugini</text>
<text x="618.3" y="667.5">Australia</text>
<text x="534.5" y="564.2">မြန်မာ</text>
</g>
<g filter="url(#sb)">
<use href="#sh" x="375.6" y="425.7"/>
<use href="#sh" x="374.5" y="427.2"/>
<use href="#sh" x="376.2" y="427.3"/>
<use href="#sh" x="383.1" y="427.5"/>
<use href="#sh" x="371.1" y="427.7"/>
<use href="#sh" x="379.0" y="429.0"/>
<use href="#sh" x="374.3" y="429.9"/>
<use href="#sh" x="366.8" y="430.0"/>
<use href="#sh" x="379.7" y="430.4"/>
<use href="#sh" x="365.7" y="431.1"/>
<use href="#sh" x="370.6" y="431.1"/>
<use href="#sh" x="385.4" y="431.2"/>
<use href="#sh" x="376.0" y="431.5"/>
<use href="#sh" x="382.4" y="432.2"/>
<use href="#sh" x="358.9" y="432.8"/>
<use href="#sh" x="352.1" y="433.0"/>
<use href="#sh" x="368.7" y="433.1"/>
<use href="#sh" x="377.8" y="433.2"/>
<use href="#sh" x="371.6" y="433.3"/>
<use href="#sh" x="384.9" y="433.3"/>
<use href="#sh" x="382.9" y="433.7"/>
<use href="#sh" x="363.0" y="433.7"/>
<use href="#sh" x="379.2" y="433.7"/>
<use href="#sh" x="366.0" y="434.3"/>
<use href="#sh" x="373.7" y="434.9"/>
<use href="#sh" x="357.1" y="435.2"/>
<use href="#sh" x="352.9" y="435.8"/>
<use href="#sh" x="361.9" y="435.8"/>
<use href="#sh" x="356.3" y="435.9"/>
<use href="#sh" x="369.1" y="436.1"/>
<use href="#sh" x="384.0" y="436.1"/>
<use href="#sh" x="364.9" y="436.7"/>
<use href="#sh" x="359.5" y="437.7"/>
<use href="#sh" x="374.5" y="437.8"/>
<use href="#sh" x="379.9" y="438.2"/>
<use href="#sh" x="376.1" y="438.3"/>
<use href="#sh" x="371.8" y="438.3"/>
<use href="#sh" x="379.4" y="438.7"/>
<use href="#sh" x="368.5" y="438.8"/>
<use href="#sh" x="381.7" y="439.1"/>
<use href="#sh" x="364.7" y="439.2"/>
<use href="#sh" x="371.7" y="439.4"/>
<use href="#sh" x="356.7" y="439.4"/>
<use href="#sh" x="353.2" y="439.7"/>
<use href="#sh" x="360.2" y="440.2"/>
<use href="#sh" x="377.1" y="440.4"/>
<use href="#sh" x="361.5" y="440.7"/>
<use href="#sh" x="347.1" y="441.0"/>
<use href="#sh" x="316.9" y="441.1"/>
<use href="#sh" x="374.3" y="441.3"/>
<use href="#sh" x="348.9" y="441.3"/>
<use href="#sh" x="372.0" y="442.1"/>
<use href="#sh" x="380.7" y="442.2"/>
<use href="#sh" x="361.7" y="442.3"/>
<use href="#sh" x="382.4" y="442.5"/>
<use href="#sh" x="347.1" y="442.6"/>
<use href="#sh" x="315.9" y="442.6"/>
<use href="#sh" x="350.3" y="442.9"/>
<use href="#sh" x="357.7" y="443.1"/>
<use href="#sh" x="366.6" y="443.1"/>
<use href="#sh" x="319.2" y="443.2"/>
<use href="#sh" x="373.1" y="443.3"/>
<use href="#sh" x="376.9" y="443.4"/>
<use href="#sh" x="354.0" y="443.6"/>
<use href="#sh" x="363.8" y="443.7"/>
<use href="#sh" x="384.7" y="444.0"/>
<use href="#sh" x="355.2" y="444.0"/>
<use href="#sh" x="385.0" y="444.8"/>
<use href="#sh" x="319.2" y="444.8"/>
<use href="#sh" x="316.2" y="445.0"/>
<use href="#sh" x="377.1" y="445.5"/>
<use href="#sh" x="353.5" y="445.5"/>
<use href="#sh" x="356.9" y="445.6"/>
<use href="#sh" x="314.5" y="445.9"/>
<use href="#sh" x="311.5" y="445.9"/>
<use href="#sh" x="379.2" y="446.3"/>
<use href="#sh" x="362.2" y="446.5"/>
<use href="#sh" x="373.7" y="446.6"/>
<use href="#sh" x="322.5" y="446.6"/>
<use href="#sh" x="367.8" y="446.9"/>
<use href="#sh" x="371.4" y="446.9"/>
<use href="#sh" x="358.2" y="447.1"/>
<use href="#sh" x="381.8" y="447.1"/>
<use href="#sh" x="350.5" y="447.2"/>
<use href="#sh" x="365.3" y="447.2"/>
<use href="#sh" x="348.9" y="448.0"/>
<use href="#sh" x="353.6" y="448.2"/>
<use href="#sh" x="383.0" y="448.3"/>
<use href="#sh" x="357.7" y="448.4"/>
<use href="#sh" x="347.2" y="448.4"/>
<use href="#sh" x="364.6" y="448.5"/>
<use href="#sh" x="372.7" y="448.8"/>
<use href="#sh" x="355.4" y="448.8"/>
<use href="#sh" x="369.1" y="449.0"/>
<use href="#sh" x="318.8" y="449.2"/>
<use href="#sh" x="371.8" y="449.3"/>
<use href="#sh" x="314.4" y="449.3"/>
<use href="#sh" x="379.5" y="449.5"/>
<use href="#sh" x="361.3" y="449.6"/>
<use href="#sh" x="317.4" y="449.6"/>
<use href="#sh" x="376.7" y="449.7"/>
<use href="#sh" x="322.5" y="449.8"/>
<use href="#sh" x="353.9" y="450.8"/>
<use href="#sh" x="350.9" y="450.9"/>
<use href="#sh" x="355.1" y="451.4"/>
<use href="#sh" x="373.5" y="451.5"/>
<use href="#sh" x="344.2" y="451.6"/>
<use href="#sh" x="346.6" y="451.7"/>
<use href="#sh" x="364.2" y="451.9"/>
<use href="#sh" x="312.6" y="452.0"/>
<use href="#sh" x="319.1" y="452.0"/>
<use href="#sh" x="359.9" y="452.0"/>
<use href="#sh" x="371.6" y="452.4"/>
<use href="#sh" x="368.0" y="452.7"/>
<use href="#sh" x="316.9" y="452.8"/>
<use href="#sh" x="322.5" y="452.9"/>
<use href="#sh" x="376.0" y="452.9"/>
<use href="#sh" x="361.6" y="453.0"/>
<use href="#sh" x="325.3" y="453.2"/>
<use href="#sh" x="311.6" y="453.2"/>
<use href="#sh" x="349.6" y="453.8"/>
<use href="#sh" x="316.0" y="454.1"/>
<use href="#sh" x="323.0" y="454.1"/>
<use href="#sh" x="325.5" y="454.2"/>
<use href="#sh" x="345.9" y="454.2"/>
<use href="#sh" x="373.7" y="454.3"/>
<use href="#sh" x="308.9" y="454.3"/>
<use href="#sh" x="310.1" y="454.5"/>
<use href="#sh" x="319.2" y="454.5"/>
<use href="#sh" x="369.0" y="454.8"/>
<use href="#sh" x="341.5" y="454.8"/>
<use href="#sh" x="359.2" y="454.9"/>
<use href="#sh" x="356.4" y="455.0"/>
<use href="#sh" x="361.0" y="455.3"/>
<use href="#sh" x="343.1" y="455.4"/>
<use href="#sh" x="330.1" y="455.6"/>
<use href="#sh" x="364.7" y="455.6"/>
<use href="#sh" x="371.1" y="455.6"/>
<use href="#sh" x="352.6" y="455.8"/>
<use href="#sh" x="314.4" y="455.9"/>
<use href="#sh" x="377.5" y="456.0"/>
<use href="#sh" x="330.9" y="456.2"/>
<use href="#sh" x="367.5" y="456.8"/>
<use href="#sh" x="314.2" y="457.4"/>
<use href="#sh" x="379.5" y="457.4"/>
<use href="#sh" x="329.6" y="457.7"/>
<use href="#sh" x="370.3" y="457.7"/>
<use href="#sh" x="320.2" y="457.8"/>
<use href="#sh" x="372.6" y="457.8"/>
<use href="#sh" x="306.9" y="457.8"/>
<use href="#sh" x="316.7" y="457.9"/>
<use href="#sh" x="342.0" y="458.0"/>
<use href="#sh" x="353.8" y="458.1"/>
<use href="#sh" x="333.7" y="458.1"/>
<use href="#sh" x="342.9" y="458.2"/>
<use href="#sh" x="349.9" y="458.4"/>
<use href="#sh" x="325.1" y="458.4"/>
<use href="#sh" x="358.1" y="458.5"/>
<use href="#sh" x="376.7" y="458.5"/>
<use href="#sh" x="311.6" y="458.6"/>
<use href="#sh" x="347.0" y="458.6"/>
<use href="#sh" x="361.6" y="458.7"/>
<use href="#sh" x="337.0" y="458.7"/>
<use href="#sh" x="323.4" y="459.1"/>
<use href="#sh" x="355.7" y="459.2"/>
<use href="#sh" x="331.9" y="459.2"/>
<use href="#sh" x="363.9" y="459.3"/>
<use href="#sh" x="374.2" y="459.7"/>
<use href="#sh" x="332.0" y="460.0"/>
<use href="#sh" x="343.7" y="460.2"/>
<use href="#sh" x="307.6" y="460.3"/>
<use href="#sh" x="349.3" y="460.3"/>
<use href="#sh" x="380.3" y="460.4"/>
<use href="#sh" x="340.6" y="460.4"/>
<use href="#sh" x="338.8" y="460.4"/>
<use href="#sh" x="328.8" y="460.5"/>
<use href="#sh" x="335.8" y="460.6"/>
<use href="#sh" x="359.3" y="460.6"/>
<use href="#sh" x="352.4" y="460.9"/>
<use href="#sh" x="316.8" y="461.2"/>
<use href="#sh" x="314.7" y="461.3"/>
<use href="#sh" x="355.7" y="461.4"/>
<use href="#sh" x="322.5" y="461.4"/>
<use href="#sh" x="345.6" y="461.6"/>
<use href="#sh" x="309.9" y="461.7"/>
<use href="#sh" x="369.0" y="461.7"/>
<use href="#sh" x="326.7" y="461.8"/>
<use href="#sh" x="363.7" y="461.9"/>
<use href="#sh" x="370.0" y="461.9"/>
<use href="#sh" x="363.0" y="461.9"/>
<use href="#sh" x="375.6" y="462.2"/>
<use href="#sh" x="319.2" y="462.2"/>
<use href="#sh" x="380.9" y="462.8"/>
<use href="#sh" x="337.9" y="462.9"/>
<use href="#sh" x="363.1" y="462.9"/>
<use href="#sh" x="334.2" y="463.1"/>
<use href="#sh" x="340.8" y="463.1"/>
<use href="#sh" x="332.0" y="463.4"/>
<use href="#sh" x="358.6" y="463.8"/>
<use href="#sh" x="376.9" y="464.0"/>
<use href="#sh" x="343.9" y="464.0"/>
<use href="#sh" x="352.8" y="464.2"/>
<use href="#sh" x="366.7" y="464.3"/>
<use href="#sh" x="365.3" y="464.4"/>
<use href="#sh" x="322.1" y="464.5"/>
<use href="#sh" x="326.0" y="464.6"/>
<use href="#sh" x="314.2" y="464.7"/>
<use href="#sh" x="309.0" y="464.8"/>
<use href="#sh" x="320.6" y="464.9"/>
<use href="#sh" x="356.3" y="464.9"/>
<use href="#sh" x="348.6" y="464.9"/>
<use href="#sh" x="347.0" y="464.9"/>
<use href="#sh" x="328.7" y="465.0"/>
<use href="#sh" x="310.0" y="465.0"/>
<use href="#sh" x="317.3" y="465.0"/>
<use href="#sh" x="371.4" y="465.1"/>
<use href="#sh" x="373.5" y="465.3"/>
<use href="#sh" x="376.1" y="465.8"/>
<use href="#sh" x="374.6" y="466.0"/>
<use href="#sh" x="348.6" y="466.2"/>
<use href="#sh" x="368.4" y="466.3"/>
<use href="#sh" x="322.9" y="466.4"/>
<use href="#sh" x="317.7" y="466.5"/>
<use href="#sh" x="345.7" y="466.5"/>
<use href="#sh" x="331.5" y="466.5"/>
<use href="#sh" x="320.8" y="466.7"/>
<use href="#sh" x="310.1" y="466.8"/>
<use href="#sh" x="371.3" y="466.9"/>
<use href="#sh" x="344.9" y="467.1"/>
<use href="#sh" x="313.7" y="467.1"/>
<use href="#sh" x="334.4" y="467.2"/>
<use href="#sh" x="365.4" y="467.3"/>
<use href="#sh" x="354.0" y="467.3"/>
<use href="#sh" x="360.0" y="467.3"/>
<use href="#sh" x="362.2" y="467.3"/>
<use href="#sh" x="339.7" y="467.6"/>
<use href="#sh" x="308.0" y="467.7"/>
<use href="#sh" x="338.3" y="467.7"/>
<use href="#sh" x="356.3" y="467.8"/>
<use href="#sh" x="329.3" y="467.8"/>
<use href="#sh" x="380.6" y="468.1"/>
<use href="#sh" x="325.9" y="468.2"/>
<use href="#sh" x="343.0" y="468.7"/>
<use href="#sh" x="354.9" y="468.7"/>
<use href="#sh" x="371.5" y="468.9"/>
<use href="#sh" x="337.7" y="469.0"/>
<use href="#sh" x="318.7" y="469.0"/>
<use href="#sh" x="362.5" y="469.2"/>
<use href="#sh" x="341.3" y="469.3"/>
<use href="#sh" x="359.5" y="469.3"/>
<use href="#sh" x="327.6" y="469.7"/>
<use href="#sh" x="307.4" y="469.8"/>
<use href="#sh" x="310.4" y="469.8"/>
<use href="#sh" x="327.0" y="469.9"/>
<use href="#sh" x="336.2" y="469.9"/>
<use href="#sh" x="315.7" y="470.2"/>
<use href="#sh" x="323.7" y="470.2"/>
<use href="#sh" x="345.6" y="470.5"/>
<use href="#sh" x="374.2" y="470.5"/>
<use href="#sh" x="363.7" y="470.7"/>
<use href="#sh" x="368.5" y="470.9"/>
<use href="#sh" x="351.8" y="471.0"/>
<use href="#sh" x="376.8" y="471.1"/>
<use href="#sh" x="314.3" y="471.1"/>
<use href="#sh" x="332.1" y="471.1"/>
<use href="#sh" x="379.3" y="471.2"/>
<use href="#sh" x="348.9" y="471.2"/>
<use href="#sh" x="313.9" y="471.9"/>
<use href="#sh" x="366.6" y="472.4"/>
<use href="#sh" x="383.1" y="472.4"/>
<use href="#sh" x="365.7" y="472.4"/>
<use href="#sh" x="338.1" y="472.5"/>
<use href="#sh" x="353.2" y="472.5"/>
<use href="#sh" x="329.2" y="472.8"/>
<use href="#sh" x="316.6" y="473.2"/>
<use href="#sh" x="370.7" y="473.2"/>
<use href="#sh" x="346.5" y="473.3"/>
<use href="#sh" x="325.5" y="473.4"/>
<use href="#sh" x="319.7" y="473.5"/>
<use href="#sh" x="358.6" y="473.5"/>
<use href="#sh" x="336.1" y="473.7"/>
<use href="#sh" x="331.6" y="473.7"/>
<use href="#sh" x="322.0" y="473.8"/>
<use href="#sh" x="344.4" y="473.9"/>
<use href="#sh" x="351.1" y="473.9"/>
<use href="#sh" x="375.7" y="473.9"/>
<use href="#sh" x="310.0" y="473.9"/>
<use href="#sh" x="380.7" y="474.0"/>
<use href="#sh" x="374.7" y="474.0"/>
<use href="#sh" x="355.7" y="474.0"/>
<use href="#sh" x="362.2" y="474.0"/>
<use href="#sh" x="339.8" y="474.2"/>
<use href="#sh" x="374.0" y="474.8"/>
<use href="#sh" x="358.0" y="474.8"/>
<use href="#sh" x="368.6" y="475.1"/>
<use href="#sh" x="346.1" y="475.2"/>
<use href="#sh" x="322.8" y="475.2"/>
<use href="#sh" x="335.6" y="475.3"/>
<use href="#sh" x="318.0" y="475.3"/>
<use href="#sh" x="383.1" y="475.4"/>
<use href="#sh" x="371.2" y="475.6"/>
<use href="#sh" x="363.2" y="475.7"/>
<use href="#sh" x="329.7" y="475.9"/>
<use href="#sh" x="380.9" y="476.0"/>
<use href="#sh" x="355.6" y="476.0"/>
<use href="#sh" x="341.9" y="476.1"/>
<use href="#sh" x="352.5" y="476.2"/>
<use href="#sh" x="343.8" y="476.2"/>
<use href="#sh" x="363.9" y="476.3"/>
<use href="#sh" x="320.2" y="476.5"/>
<use href="#sh" x="349.1" y="476.5"/>
<use href="#sh" x="313.1" y="476.7"/>
<use href="#sh" x="325.3" y="476.7"/>
<use href="#sh" x="311.0" y="476.8"/>
<use href="#sh" x="330.8" y="476.8"/>
<use href="#sh" x="338.1" y="477.0"/>
<use href="#sh" x="375.7" y="477.3"/>
<use href="#sh" x="310.3" y="477.8"/>
<use href="#sh" x="349.2" y="477.8"/>
<use href="#sh" x="359.8" y="477.8"/>
<use href="#sh" x="315.8" y="477.8"/>
<use href="#sh" x="327.0" y="477.9"/>
<use href="#sh" x="382.3" y="478.0"/>
<use href="#sh" x="366.7" y="478.1"/>
<use href="#sh" x="343.8" y="478.1"/>
<use href="#sh" x="385.9" y="478.1"/>
<use href="#sh" x="313.1" y="478.2"/>
<use href="#sh" x="374.4" y="478.5"/>
<use href="#sh" x="378.9" y="478.5"/>
<use href="#sh" x="352.3" y="478.6"/>
<use href="#sh" x="341.3" y="478.7"/>
<use href="#sh" x="329.2" y="478.7"/>
<use href="#sh" x="334.3" y="479.2"/>
<use href="#sh" x="362.6" y="479.5"/>
<use href="#sh" x="377.1" y="479.7"/>
<use href="#sh" x="320.0" y="480.0"/>
<use href="#sh" x="356.9" y="480.1"/>
<use href="#sh" x="371.6" y="480.1"/>
<use href="#sh" x="322.8" y="480.2"/>
<use href="#sh" x="338.3" y="480.2"/>
<use href="#sh" x="330.9" y="480.2"/>
<use href="#sh" x="365.3" y="480.3"/>
<use href="#sh" x="348.1" y="480.3"/>
<use href="#sh" x="340.2" y="480.8"/>
<use href="#sh" x="338.2" y="481.1"/>
<use href="#sh" x="311.5" y="481.2"/>
<use href="#sh" x="376.3" y="481.2"/>
<use href="#sh" x="371.3" y="481.2"/>
<use href="#sh" x="352.0" y="481.4"/>
<use href="#sh" x="373.8" y="481.4"/>
<use href="#sh" x="384.9" y="481.5"/>
<use href="#sh" x="356.8" y="481.6"/>
<use href="#sh" x="331.8" y="481.6"/>
<use href="#sh" x="349.3" y="481.8"/>
<use href="#sh" x="322.0" y="481.9"/>
<use href="#sh" x="335.7" y="481.9"/>
<use href="#sh" x="358.0" y="482.0"/>
<use href="#sh" x="344.5" y="482.1"/>
<use href="#sh" x="329.8" y="482.3"/>
<use href="#sh" x="346.0" y="483.0"/>
<use href="#sh" x="320.9" y="483.0"/>
<use href="#sh" x="366.7" y="483.0"/>
<use href="#sh" x="361.4" y="483.0"/>
<use href="#sh" x="384.2" y="483.1"/>
<use href="#sh" x="312.7" y="483.1"/>
<use href="#sh" x="324.9" y="483.1"/>
<use href="#sh" x="316.2" y="483.1"/>
<use href="#sh" x="363.9" y="483.2"/>
<use href="#sh" x="379.5" y="483.3"/>
<use href="#sh" x="316.0" y="483.7"/>
<use href="#sh" x="367.9" y="483.7"/>
<use href="#sh" x="312.1" y="483.7"/>
<use href="#sh" x="359.5" y="483.8"/>
<use href="#sh" x="352.1" y="483.9"/>
<use href="#sh" x="336.8" y="483.9"/>
<use href="#sh" x="329.1" y="484.1"/>
<use href="#sh" x="379.6" y="484.1"/>
<use href="#sh" x="335.5" y="484.2"/>
<use href="#sh" x="343.3" y="484.2"/>
<use href="#sh" x="327.0" y="484.3"/>
<use href="#sh" x="374.9" y="484.4"/>
<use href="#sh" x="362.7" y="484.6"/>
<use href="#sh" x="314.7" y="484.6"/>
<use href="#sh" x="356.5" y="484.8"/>
<use href="#sh" x="322.1" y="484.8"/>
<use href="#sh" x="372.0" y="484.9"/>
<use href="#sh" x="341.2" y="485.0"/>
<use href="#sh" x="384.6" y="485.1"/>
<use href="#sh" x="320.8" y="485.1"/>
<use href="#sh" x="350.7" y="485.2"/>
<use href="#sh" x="382.6" y="485.2"/>
<use href="#sh" x="347.2" y="485.5"/>
<use href="#sh" x="331.1" y="485.7"/>
<use href="#sh" x="376.1" y="485.9"/>
<use href="#sh" x="329.0" y="486.8"/>
<use href="#sh" x="339.7" y="487.0"/>
<use href="#sh" x="334.1" y="487.0"/>
<use href="#sh" x="353.4" y="487.0"/>
<use href="#sh" x="357.7" y="487.0"/>
<use href="#sh" x="377.5" y="487.1"/>
<use href="#sh" x="344.4" y="487.2"/>
<use href="#sh" x="333.1" y="487.3"/>
<use href="#sh" x="382.6" y="487.8"/>
<use href="#sh" x="324.1" y="488.0"/>
<use href="#sh" x="350.1" y="488.1"/>
<use href="#sh" x="325.9" y="488.1"/>
<use href="#sh" x="373.0" y="488.2"/>
<use href="#sh" x="345.6" y="488.3"/>
<use href="#sh" x="313.4" y="488.5"/>
<use href="#sh" x="356.9" y="488.6"/>
<use href="#sh" x="316.6" y="488.7"/>
<use href="#sh" x="337.3" y="488.8"/>
<use href="#sh" x="371.1" y="488.9"/>
<use href="#sh" x="311.7" y="489.0"/>
<use href="#sh" x="318.8" y="489.0"/>
<use href="#sh" x="380.7" y="489.1"/>
<use href="#sh" x="353.9" y="489.8"/>
<use href="#sh" x="335.0" y="489.9"/>
<use href="#sh" x="339.7" y="490.1"/>
<use href="#sh" x="386.0" y="490.1"/>
<use href="#sh" x="356.3" y="490.4"/>
<use href="#sh" x="359.4" y="490.4"/>
<use href="#sh" x="372.1" y="490.4"/>
<use href="#sh" x="310.2" y="490.6"/>
<use href="#sh" x="332.2" y="490.6"/>
<use href="#sh" x="328.2" y="490.8"/>
<use href="#sh" x="368.0" y="490.8"/>
<use href="#sh" x="382.3" y="490.9"/>
<use href="#sh" x="337.7" y="491.0"/>
<use href="#sh" x="381.1" y="491.0"/>
<use href="#sh" x="321.7" y="491.0"/>
<use href="#sh" x="375.9" y="491.2"/>
<use href="#sh" x="348.0" y="491.3"/>
<use href="#sh" x="373.4" y="491.4"/>
<use href="#sh" x="345.1" y="491.7"/>
<use href="#sh" x="320.7" y="491.9"/>
<use href="#sh" x="350.7" y="492.0"/>
<use href="#sh" x="317.7" y="492.1"/>
<use href="#sh" x="327.1" y="492.1"/>
<use href="#sh" x="313.7" y="492.3"/>
<use href="#sh" x="355.0" y="492.9"/>
<use href="#sh" x="344.8" y="493.3"/>
<use href="#sh" x="331.4" y="493.3"/>
<use href="#sh" x="310.3" y="493.3"/>
<use href="#sh" x="373.0" y="493.6"/>
<use href="#sh" x="339.6" y="493.6"/>
<use href="#sh" x="307.4" y="493.8"/>
<use href="#sh" x="329.2" y="493.9"/>
<use href="#sh" x="347.0" y="494.0"/>
<use href="#sh" x="334.2" y="494.0"/>
<use href="#sh" x="383.7" y="494.0"/>
<use href="#sh" x="312.8" y="494.1"/>
<use href="#sh" x="325.8" y="494.1"/>
<use href="#sh" x="337.6" y="494.2"/>
<use href="#sh" x="317.8" y="494.3"/>
<use href="#sh" x="320.1" y="494.4"/>
<use href="#sh" x="376.5" y="494.5"/>
<use href="#sh" x="322.1" y="494.5"/>
<use href="#sh" x="372.1" y="494.6"/>
<use href="#sh" x="352.4" y="494.7"/>
<use href="#sh" x="380.2" y="494.9"/>
<use href="#sh" x="349.3" y="495.3"/>
<use href="#sh" x="314.9" y="495.7"/>
<use href="#sh" x="369.6" y="495.8"/>
<use href="#sh" x="356.1" y="495.9"/>
<use href="#sh" x="312.0" y="496.0"/>
<use href="#sh" x="335.5" y="496.5"/>
<use href="#sh" x="349.1" y="496.5"/>
<use href="#sh" x="340.6" y="496.5"/>
<use href="#sh" x="329.2" y="496.7"/>
<use href="#sh" x="323.1" y="496.8"/>
<use href="#sh" x="346.9" y="496.9"/>
<use href="#sh" x="331.8" y="496.9"/>
<use href="#sh" x="305.6" y="496.9"/>
<use href="#sh" x="374.1" y="497.0"/>
<use href="#sh" x="382.9" y="497.0"/>
<use href="#sh" x="337.6" y="497.1"/>
<use href="#sh" x="352.0" y="497.2"/>
<use href="#sh" x="317.6" y="497.2"/>
<use href="#sh" x="308.6" y="497.5"/>
<use href="#sh" x="378.0" y="497.7"/>
<use href="#sh" x="344.6" y="497.9"/>
<use href="#sh" x="326.6" y="498.0"/>
<use href="#sh" x="319.9" y="498.2"/>
<use href="#sh" x="380.0" y="498.3"/>
<use href="#sh" x="340.9" y="499.0"/>
<use href="#sh" x="358.1" y="499.2"/>
<use href="#sh" x="383.3" y="499.2"/>
<use href="#sh" x="352.0" y="499.5"/>
<use href="#sh" x="375.6" y="499.5"/>
<use href="#sh" x="312.9" y="499.7"/>
<use href="#sh" x="350.9" y="499.8"/>
<use href="#sh" x="324.1" y="500.0"/>
<use href="#sh" x="355.9" y="500.0"/>
<use href="#sh" x="311.4" y="500.1"/>
<use href="#sh" x="316.6" y="500.2"/>
<use href="#sh" x="380.8" y="500.2"/>
<use href="#sh" x="325.7" y="500.3"/>
<use href="#sh" x="344.9" y="500.5"/>
<use href="#sh" x="373.4" y="500.5"/>
<use href="#sh" x="339.1" y="500.8"/>
<use href="#sh" x="320.1" y="501.0"/>
<use href="#sh" x="307.5" y="501.2"/>
<use href="#sh" x="347.7" y="501.3"/>
<use href="#sh" x="317.6" y="502.0"/>
<use href="#sh" x="312.9" y="502.1"/>
<use href="#sh" x="318.9" y="502.1"/>
<use href="#sh" x="380.5" y="502.3"/>
<use href="#sh" x="344.1" y="502.6"/>
<use href="#sh" x="346.8" y="502.7"/>
<use href="#sh" x="376.2" y="502.7"/>
<use href="#sh" x="311.1" y="502.8"/>
<use href="#sh" x="355.7" y="503.3"/>
<use href="#sh" x="323.0" y="503.8"/>
<use href="#sh" x="382.4" y="504.0"/>
<use href="#sh" x="348.7" y="504.0"/>
<use href="#sh" x="339.9" y="504.1"/>
<use href="#sh" x="353.1" y="504.2"/>
<use href="#sh" x="308.0" y="504.3"/>
<use href="#sh" x="319.6" y="504.9"/>
<use href="#sh" x="314.1" y="505.0"/>
<use href="#sh" x="380.9" y="505.0"/>
<use href="#sh" x="344.8" y="505.0"/>
<use href="#sh" x="350.7" y="505.1"/>
<use href="#sh" x="307.5" y="505.2"/>
<use href="#sh" x="377.2" y="505.3"/>
<use href="#sh" x="312.1" y="505.5"/>
<use href="#sh" x="317.0" y="505.7"/>
<use href="#sh" x="382.9" y="506.1"/>
<use href="#sh" x="352.5" y="506.6"/>
<use href="#sh" x="346.8" y="506.9"/>
<use href="#sh" x="355.6" y="507.2"/>
<use href="#sh" x="356.4" y="508.3"/>
<use href="#sh" x="342.9" y="508.4"/>
<use href="#sh" x="378.7" y="508.5"/>
<use href="#sh" x="350.3" y="508.6"/>
<use href="#sh" x="352.7" y="509.4"/>
<use href="#sh" x="345.7" y="509.5"/>
<use href="#sh" x="345.1" y="511.8"/>
<use href="#sh" x="348.0" y="512.5"/>
<use href="#sh" x="373.1" y="425.0"/>
<use href="#sh" x="391.0" y="426.4"/>
<use href="#sh" x="391.6" y="426.8"/>
<use href="#sh" x="348.1" y="428.3"/>
<use href="#sh" x="364.6" y="430.3"/>
<use href="#sh" x="351.4" y="437.1"/>
<use href="#sh" x="366.7" y="437.9"/>
<use href="#sh" x="320.6" y="439.3"/>
<use href="#sh" x="384.6" y="439.3"/>
<use href="#sh" x="384.5" y="439.5"/>
<use href="#sh" x="345.3" y="445.7"/>
<use href="#sh" x="350.6" y="446.1"/>
<use href="#sh" x="62.3" y="448.5"/>
<use href="#sh" x="351.4" y="450.7"/>
<use href="#sh" x="378.6" y="452.1"/>
<use href="#sh" x="378.5" y="452.2"/>
<use href="#sh" x="345.6" y="452.9"/>
<use href="#sh" x="354.1" y="457.9"/>
<use href="#sh" x="367.0" y="459.7"/>
<use href="#sh" x="306.7" y="461.4"/>
<use href="#sh" x="392.4" y="465.4"/>
<use href="#sh" x="392.4" y="465.7"/>
<use href="#sh" x="310.7" y="466.4"/>
<use href="#sh" x="109.0" y="467.5"/>
<use href="#sh" x="76.7" y="468.0"/>
<use href="#sh" x="113.1" y="468.3"/>
<use href="#sh" x="116.0" y="469.0"/>
<use href="#sh" x="53.8" y="469.2"/>
<use href="#sh" x="321.7" y="470.0"/>
<use href="#sh" x="55.5" y="471.5"/>
<use href="#sh" x="166.7" y="471.5"/>
<use href="#sh" x="383.1" y="471.7"/>
<use href="#sh" x="315.0" y="472.1"/>
<use href="#sh" x="383.1" y="472.1"/>
<use href="#sh" x="333.1" y="472.9"/>
<use href="#sh" x="471.8" y="473.4"/>
<use href="#sh" x="103.8" y="474.2"/>
<use href="#sh" x="111.4" y="475.9"/>
<use href="#sh" x="308.6" y="476.9"/>
<use href="#sh" x="384.6" y="476.9"/>
<use href="#sh" x="53.8" y="477.6"/>
<use href="#sh" x="117.4" y="477.6"/>
<use href="#sh" x="321.4" y="478.6"/>
<use href="#sh" x="167.0" y="479.0"/>
<use href="#sh" x="64.0" y="479.3"/>
<use href="#sh" x="80.4" y="479.7"/>
<use href="#sh" x="314.3" y="480.3"/>
<use href="#sh" x="157.4" y="481.0"/>
<use href="#sh" x="163.6" y="481.4"/>
<use href="#sh" x="152.0" y="482.0"/>
<use href="#sh" x="169.2" y="482.7"/>
<use href="#sh" x="343.4" y="482.9"/>
<use href="#sh" x="172.0" y="483.0"/>
<use href="#sh" x="369.3" y="483.3"/>
<use href="#sh" x="119.9" y="483.6"/>
<use href="#sh" x="146.0" y="484.0"/>
<use href="#sh" x="161.0" y="484.0"/>
<use href="#sh" x="104.6" y="484.7"/>
<use href="#sh" x="111.9" y="485.3"/>
<use href="#sh" x="175.2" y="485.3"/>
<use href="#sh" x="138.7" y="485.6"/>
<use href="#sh" x="138.9" y="485.8"/>
<use href="#sh" x="165.0" y="486.0"/>
<use href="#sh" x="386.7" y="486.0"/>
<use href="#sh" x="58.9" y="486.1"/>
<use href="#sh" x="386.5" y="486.1"/>
<use href="#sh" x="156.0" y="487.0"/>
<use href="#sh" x="171.0" y="487.0"/>
<use href="#sh" x="311.7" y="487.1"/>
<use href="#sh" x="337.9" y="487.1"/>
<use href="#sh" x="361.4" y="487.6"/>
<use href="#sh" x="603.0" y="488.2"/>
<use href="#sh" x="608.6" y="488.2"/>
<use href="#sh" x="319.6" y="488.6"/>
<use href="#sh" x="159.6" y="489.0"/>
<use href="#sh" x="174.0" y="489.0"/>
<use href="#sh" x="149.9" y="489.2"/>
<use href="#sh" x="150.1" y="489.3"/>
<use href="#sh" x="141.0" y="490.0"/>
<use href="#sh" x="153.0" y="490.0"/>
<use href="#sh" x="168.0" y="490.7"/>
<use href="#sh" x="583.7" y="490.8"/>
<use href="#sh" x="590.8" y="490.8"/>
<use href="#sh" x="133.0" y="492.0"/>
<use href="#sh" x="147.0" y="492.0"/>
<use href="#sh" x="162.0" y="492.0"/>
<use href="#sh" x="418.4" y="492.0"/>
<use href="#sh" x="52.1" y="492.9"/>
<use href="#sh" x="78.7" y="492.9"/>
<use href="#sh" x="163.0" y="493.0"/>
<use href="#sh" x="352.4" y="493.1"/>
<use href="#sh" x="123.3" y="493.2"/>
<use href="#sh" x="104.6" y="493.7"/>
<use href="#sh" x="158.0" y="494.0"/>
<use href="#sh" x="477.4" y="494.1"/>
<use href="#sh" x="150.0" y="495.0"/>
<use href="#sh" x="356.3" y="495.3"/>
<use href="#sh" x="112.3" y="495.4"/>
<use href="#sh" x="154.0" y="495.4"/>
<use href="#sh" x="356.5" y="495.6"/>
<use href="#sh" x="588.8" y="495.7"/>
<use href="#sh" x="136.0" y="496.0"/>
<use href="#sh" x="166.0" y="496.0"/>
<use href="#sh" x="143.0" y="496.6"/>
<use href="#sh" x="394.6" y="496.8"/>
<use href="#sh" x="586.0" y="497.0"/>
<use href="#sh" x="130.2" y="497.1"/>
<use href="#sh" x="143.1" y="497.1"/>
<use href="#sh" x="317.1" y="497.6"/>
<use href="#sh" x="317.2" y="497.6"/>
<use href="#sh" x="332.4" y="497.6"/>
<use href="#sh" x="332.8" y="497.6"/>
<use href="#sh" x="130.9" y="498.0"/>
<use href="#sh" x="397.2" y="498.3"/>
<use href="#sh" x="160.7" y="498.6"/>
<use href="#sh" x="396.8" y="498.6"/>
<use href="#sh" x="149.0" y="499.0"/>
<use href="#sh" x="157.0" y="499.0"/>
<use href="#sh" x="57.2" y="499.7"/>
<use href="#sh" x="134.3" y="499.7"/>
<use href="#sh" x="582.3" y="499.7"/>
<use href="#sh" x="134.1" y="500.0"/>
<use href="#sh" x="370.6" y="500.0"/>
<use href="#sh" x="370.4" y="500.2"/>
<use href="#sh" x="89.4" y="501.0"/>
<use href="#sh" x="144.0" y="501.0"/>
<use href="#sh" x="304.9" y="501.1"/>
<use href="#sh" x="154.6" y="501.4"/>
<use href="#sh" x="304.0" y="501.5"/>
<use href="#sh" x="155.7" y="502.0"/>
<use href="#sh" x="326.0" y="502.2"/>
<use href="#sh" x="326.0" y="502.4"/>
<use href="#sh" x="126.0" y="502.5"/>
<use href="#sh" x="126.7" y="502.7"/>
<use href="#sh" x="340.6" y="502.9"/>
<use href="#sh" x="580.0" y="503.0"/>
<use href="#sh" x="340.4" y="503.2"/>
<use href="#sh" x="120.7" y="503.4"/>
<use href="#sh" x="138.7" y="503.4"/>
<use href="#sh" x="139.4" y="503.4"/>
<use href="#sh" x="571.0" y="503.6"/>
<use href="#sh" x="56.3" y="503.9"/>
<use href="#sh" x="384.1" y="503.9"/>
<use href="#sh" x="577.7" y="504.0"/>
<use href="#sh" x="384.5" y="504.1"/>
<use href="#sh" x="376.0" y="504.3"/>
<use href="#sh" x="384.1" y="504.3"/>
<use href="#sh" x="604.0" y="504.6"/>
<use href="#sh" x="376.3" y="504.7"/>
<use href="#sh" x="376.8" y="504.7"/>
<use href="#sh" x="147.0" y="505.0"/>
<use href="#sh" x="151.0" y="505.0"/>
<use href="#sh" x="562.5" y="505.6"/>
<use href="#sh" x="307.7" y="505.7"/>
<use href="#sh" x="83.5" y="506.1"/>
<use href="#sh" x="307.9" y="506.1"/>
<use href="#sh" x="317.2" y="506.6"/>
<use href="#sh" x="549.7" y="506.6"/>
<use href="#sh" x="317.1" y="506.7"/>
<use href="#sh" x="58.0" y="507.0"/>
<use href="#sh" x="575.0" y="507.0"/>
<use href="#sh" x="608.0" y="507.6"/>
<use href="#sh" x="347.7" y="507.8"/>
<use href="#sh" x="545.0" y="508.0"/>
<use href="#sh" x="566.0" y="508.0"/>
<use href="#sh" x="347.7" y="508.1"/>
<use href="#sh" x="583.7" y="508.6"/>
<use href="#sh" x="152.3" y="509.3"/>
<use href="#sh" x="547.7" y="509.5"/>
<use href="#sh" x="554.6" y="509.5"/>
<use href="#sh" x="629.7" y="509.6"/>
<use href="#sh" x="60.6" y="509.8"/>
<use href="#sh" x="153.0" y="509.8"/>
<use href="#sh" x="292.9" y="509.8"/>
<use href="#sh" x="356.5" y="510.0"/>
<use href="#sh" x="356.7" y="510.0"/>
<use href="#sh" x="558.0" y="510.0"/>
<use href="#sh" x="572.4" y="510.5"/>
<use href="#sh" x="146.7" y="511.0"/>
<use href="#sh" x="633.7" y="511.1"/>
<use href="#sh" x="394.6" y="511.2"/>
<use href="#sh" x="381.4" y="511.4"/>
<use href="#sh" x="147.0" y="511.5"/>
<use href="#sh" x="618.9" y="511.5"/>
<use href="#sh" x="624.4" y="511.5"/>
<use href="#sh" x="381.4" y="511.7"/>
<use href="#sh" x="381.1" y="512.0"/>
<use href="#sh" x="396.7" y="512.0"/>
<use href="#sh" x="552.0" y="512.0"/>
<use href="#sh" x="578.0" y="512.0"/>
<use href="#sh" x="399.6" y="512.1"/>
<use href="#sh" x="63.0" y="514.0"/>
<use href="#sh" x="141.6" y="514.4"/>
<use href="#sh" x="141.9" y="514.9"/>
<use href="#sh" x="346.0" y="515.0"/>
<use href="#sh" x="569.0" y="515.0"/>
<use href="#sh" x="346.0" y="515.1"/>
<use href="#sh" x="561.9" y="515.5"/>
<use href="#sh" x="66.0" y="517.0"/>
<use href="#sh" x="582.9" y="517.1"/>
<use href="#sh" x="555.6" y="517.5"/>
<use href="#sh" x="576.0" y="519.0"/>
<use href="#sh" x="550.1" y="519.4"/>
<use href="#sh" x="69.1" y="519.5"/>
<use href="#sh" x="560.0" y="520.0"/>
<use href="#sh" x="81.4" y="520.7"/>
<use href="#sh" x="571.0" y="521.0"/>
<use href="#sh" x="103.8" y="521.7"/>
<use href="#sh" x="563.9" y="522.4"/>
<use href="#sh" x="589.2" y="523.4"/>
<use href="#sh" x="121.9" y="523.7"/>
<use href="#sh" x="138.2" y="523.7"/>
<use href="#sh" x="72.0" y="524.0"/>
<use href="#sh" x="556.0" y="524.0"/>
<use href="#sh" x="137.9" y="524.1"/>
<use href="#sh" x="115.2" y="525.4"/>
<use href="#sh" x="535.4" y="525.4"/>
<use href="#sh" x="535.6" y="525.5"/>
<use href="#sh" x="143.5" y="525.8"/>
<use href="#sh" x="143.6" y="525.8"/>
<use href="#sh" x="107.5" y="526.3"/>
<use href="#sh" x="568.4" y="526.4"/>
<use href="#sh" x="81.4" y="526.8"/>
<use href="#sh" x="558.6" y="527.3"/>
<use href="#sh" x="579.7" y="527.9"/>
<use href="#sh" x="494.9" y="528.9"/>
<use href="#sh" x="573.4" y="528.9"/>
<use href="#sh" x="540.8" y="529.3"/>
<use href="#sh" x="565.0" y="530.0"/>
<use href="#sh" x="75.3" y="530.8"/>
<use href="#sh" x="92.4" y="532.2"/>
<use href="#sh" x="544.7" y="533.3"/>
<use href="#sh" x="559.5" y="533.3"/>
<use href="#sh" x="606.4" y="533.7"/>
<use href="#sh" x="85.2" y="533.9"/>
<use href="#sh" x="553.0" y="534.0"/>
<use href="#sh" x="587.2" y="534.3"/>
<use href="#sh" x="78.7" y="535.9"/>
<use href="#sh" x="548.0" y="536.0"/>
<use href="#sh" x="593.6" y="536.2"/>
<use href="#sh" x="87.0" y="537.0"/>
<use href="#sh" x="507.4" y="537.0"/>
<use href="#sh" x="541.0" y="537.0"/>
<use href="#sh" x="411.3" y="538.6"/>
<use href="#sh" x="590.8" y="539.2"/>
<use href="#sh" x="95.3" y="539.8"/>
<use href="#sh" x="103.5" y="539.8"/>
<use href="#sh" x="544.0" y="540.0"/>
<use href="#sh" x="551.0" y="540.0"/>
<use href="#sh" x="83.8" y="541.0"/>
<use href="#sh" x="90.6" y="541.2"/>
<use href="#sh" x="555.6" y="542.2"/>
<use href="#sh" x="540.0" y="543.0"/>
<use href="#sh" x="576.4" y="544.2"/>
<use href="#sh" x="100.4" y="544.4"/>
<use href="#sh" x="411.3" y="544.7"/>
<use href="#sh" x="549.7" y="544.7"/>
<use href="#sh" x="93.0" y="545.0"/>
<use href="#sh" x="546.0" y="545.0"/>
<use href="#sh" x="109.2" y="545.8"/>
<use href="#sh" x="98.0" y="546.0"/>
<use href="#sh" x="543.0" y="546.0"/>
<use href="#sh" x="128.4" y="547.1"/>
<use href="#sh" x="106.0" y="548.0"/>
<use href="#sh" x="101.8" y="550.0"/>
<use href="#sh" x="124.0" y="551.0"/>
<use href="#sh" x="566.5" y="551.1"/>
<use href="#sh" x="109.2" y="551.2"/>
<use href="#sh" x="541.9" y="551.5"/>
<use href="#sh" x="96.2" y="551.7"/>
<use href="#sh" x="542.1" y="552.1"/>
<use href="#sh" x="114.3" y="552.2"/>
<use href="#sh" x="128.0" y="553.4"/>
<use href="#sh" x="117.0" y="554.0"/>
<use href="#sh" x="103.5" y="555.6"/>
<use href="#sh" x="120.2" y="556.4"/>
<use href="#sh" x="111.4" y="558.8"/>
<use href="#sh" x="496.3" y="565.7"/>
<use href="#sh" x="136.0" y="566.7"/>
<use href="#sh" x="492.2" y="566.8"/>
<use href="#sh" x="135.2" y="567.3"/>
<use href="#sh" x="138.5" y="570.0"/>
<use href="#sh" x="139.7" y="570.8"/>
<use href="#sh" x="149.2" y="574.1"/>
<use href="#sh" x="148.7" y="575.6"/>
<use href="#sh" x="143.1" y="575.8"/>
<use href="#sh" x="142.4" y="576.9"/>
<use href="#sh" x="547.0" y="580.0"/>
<use href="#sh" x="198.3" y="580.7"/>
<use href="#sh" x="545.9" y="583.7"/>
<use href="#sh" x="549.5" y="586.1"/>
<use href="#sh" x="551.0" y="588.0"/>
<use href="#sh" x="543.6" y="588.5"/>
<use href="#sh" x="553.1" y="590.8"/>
<use href="#sh" x="401.5" y="596.4"/>
<use href="#sh" x="404.0" y="596.4"/>
<use href="#sh" x="192.4" y="601.0"/>
<use href="#sh" x="447.3" y="605.3"/>
<use href="#sh" x="568.5" y="611.0"/>
<use href="#sh" x="422.0" y="620.0"/>
<use href="#sh" x="420.6" y="621.0"/>
<use href="#sh" x="201.6" y="622.1"/>
<use href="#sh" x="424.4" y="622.8"/>
<use href="#sh" x="201.6" y="629.5"/>
<use href="#sh" x="219.4" y="629.8"/>
<use href="#sh" x="646.1" y="631.9"/>
<use href="#sh" x="434.6" y="633.7"/>
<use href="#sh" x="430.8" y="636.3"/>
<use href="#sh" x="464.6" y="638.3"/>
<use href="#sh" x="230.6" y="640.9"/>
<use href="#sh" x="451.6" y="641.4"/>
<use href="#sh" x="221.9" y="641.7"/>
<use href="#sh" x="447.8" y="642.1"/>
<use href="#sh" x="218.6" y="643.0"/>
<use href="#sh" x="449.5" y="643.0"/>
<use href="#sh" x="222.4" y="648.1"/>
<use href="#sh" x="659.8" y="659.7"/>
<use href="#sh" x="208.5" y="662.0"/>
<use href="#sh" x="211.5" y="662.8"/>
<use href="#sh" x="657.9" y="670.3"/>
<use href="#sh" x="366.4" y="673.7"/>
<use href="#sh" x="637.8" y="675.1"/>
<use href="#sh" x="656.8" y="675.8"/>
<use href="#sh" x="196.3" y="676.0"/>
<use href="#sh" x="629.7" y="676.3"/>
<use href="#sh" x="201.6" y="676.5"/>
<use href="#sh" x="197.5" y="684.9"/>
</g>
<use href="#pn" x="375.6" y="425.7"/>
<use href="#pn" x="374.5" y="427.2"/>
<use href="#pn" x="376.2" y="427.3"/>
<use href="#pn" x="383.1" y="427.5"/>
<use href="#pn" x="371.1" y="427.7"/>
<use href="#pn" x="379.0" y="429.0"/>
<use href="#pn" x="374.3" y="429.9"/>
<use href="#pn" x="366.8" y="430.0"/>
<use href="#pn" x="379.7" y="430.4"/>
<use href="#pn" x="365.7" y="431.1"/>
<use href="#pn" x="370.6" y="431.1"/>
<use href="#pn" x="385.4" y="431.2"/>
<use href="#pn" x="376.0" y="431.5"/>
<use href="#pn" x="382.4" y="432.2"/>
<use href="#pn" x="358.9" y="432.8"/>
<use href="#pn" x="352.1" y="433.0"/>
<use href="#pn" x="368.7" y="433.1"/>
<use href="#pn" x="377.8" y="433.2"/>
<use href="#pn" x="371.6" y="433.3"/>
<use href="#pn" x="384.9" y="433.3"/>
<use href="#pn" x="382.9" y="433.7"/>
<use href="#pn" x="363.0" y="433.7"/>
<use href="#pn" x="379.2" y="433.7"/>
<use href="#pn" x="366.0" y="434.3"/>
<use href="#pn" x="373.7" y="434.9"/>
<use href="#pn" x="357.1" y="435.2"/>
<use href="#pn" x="352.9" y="435.8"/>
<use href="#pn" x="361.9" y="435.8"/>
<use href="#pn" x="356.3" y="435.9"/>
<use href="#pn" x="369.1" y="436.1"/>
<use href="#pn" x="384.0" y="436.1"/>
<use href="#pn" x="364.9" y="436.7"/>
<use href="#pn" x="359.5" y="437.7"/>
<use href="#pn" x="374.5" y="437.8"/>
<use href="#pn" x="379.9" y="438.2"/>
<use href="#pn" x="376.1" y="438.3"/>
<use href="#pn" x="371.8" y="438.3"/>
<use href="#pn" x="379.4" y="438.7"/>
<use href="#pn" x="368.5" y="438.8"/>
<use href="#pn" x="381.7" y="439.1"/>
<use href="#pn" x="364.7" y="439.2"/>
<use href="#pn" x="371.7" y="439.4"/>
<use href="#pn" x="356.7" y="439.4"/>
<use href="#pn" x="353.2" y="439.7"/>
<use href="#pn" x="360.2" y="440.2"/>
<use href="#pn" x="377.1" y="440.4"/>
<use href="#pn" x="361.5" y="440.7"/>
<use href="#pn" x="347.1" y="441.0"/>
<use href="#pn" x="316.9" y="441.1"/>
<use href="#pn" x="374.3" y="441.3"/>
<use href="#pn" x="348.9" y="441.3"/>
<use href="#pn" x="372.0" y="442.1"/>
<use href="#pn" x="380.7" y="442.2"/>
<use href="#pn" x="361.7" y="442.3"/>
<use href="#pn" x="382.4" y="442.5"/>
<use href="#pn" x="347.1" y="442.6"/>
<use href="#pn" x="315.9" y="442.6"/>
<use href="#pn" x="350.3" y="442.9"/>
<use href="#pn" x="357.7" y="443.1"/>
<use href="#pn" x="366.6" y="443.1"/>
<use href="#pn" x="319.2" y="443.2"/>
<use href="#pn" x="373.1" y="443.3"/>
<use href="#pn" x="376.9" y="443.4"/>
<use href="#pn" x="354.0" y="443.6"/>
<use href="#pn" x="363.8" y="443.7"/>
<use href="#pn" x="384.7" y="444.0"/>
<use href="#pn" x="355.2" y="444.0"/>
<use href="#pn" x="385.0" y="444.8"/>
<use href="#pn" x="319.2" y="444.8"/>
<use href="#pn" x="316.2" y="445.0"/>
<use href="#pn" x="377.1" y="445.5"/>
<use href="#pn" x="353.5" y="445.5"/>
<use href="#pn" x="356.9" y="445.6"/>
<use href="#pn" x="314.5" y="445.9"/>
<use href="#pn" x="311.5" y="445.9"/>
<use href="#pn" x="379.2" y="446.3"/>
<use href="#pn" x="362.2" y="446.5"/>
<use href="#pn" x="373.7" y="446.6"/>
<use href="#pn" x="322.5" y="446.6"/>
<use href="#pn" x="367.8" y="446.9"/>
<use href="#pn" x="371.4" y="446.9"/>
<use href="#pn" x="358.2" y="447.1"/>
<use href="#pn" x="381.8" y="447.1"/>
<use href="#pn" x="350.5" y="447.2"/>
<use href="#pn" x="365.3" y="447.2"/>
<use href="#pn" x="348.9" y="448.0"/>
<use href="#pn" x="353.6" y="448.2"/>
<use href="#pn" x="383.0" y="448.3"/>
<use href="#pn" x="357.7" y="448.4"/>
<use href="#pn" x="347.2" y="448.4"/>
<use href="#pn" x="364.6" y="448.5"/>
<use href="#pn" x="372.7" y="448.8"/>
<use href="#pn" x="355.4" y="448.8"/>
<use href="#pn" x="369.1" y="449.0"/>
<use href="#pn" x="318.8" y="449.2"/>
<use href="#pn" x="371.8" y="449.3"/>
<use href="#pn" x="314.4" y="449.3"/>
<use href="#pn" x="379.5" y="449.5"/>
<use href="#pn" x="361.3" y="449.6"/>
<use href="#pn" x="317.4" y="449.6"/>
<use href="#pn" x="376.7" y="449.7"/>
<use href="#pn" x="322.5" y="449.8"/>
<use href="#pn" x="353.9" y="450.8"/>
<use href="#pn" x="350.9" y="450.9"/>
<use href="#pn" x="355.1" y="451.4"/>
<use href="#pn" x="373.5" y="451.5"/>
<use href="#pn" x="344.2" y="451.6"/>
<use href="#pn" x="346.6" y="451.7"/>
<use href="#pn" x="364.2" y="451.9"/>
<use href="#pn" x="312.6" y="452.0"/>
<use href="#pn" x="319.1" y="452.0"/>
<use href="#pn" x="359.9" y="452.0"/>
<use href="#pn" x="371.6" y="452.4"/>
<use href="#pn" x="368.0" y="452.7"/>
<use href="#pn" x="316.9" y="452.8"/>
<use href="#pn" x="322.5" y="452.9"/>
<use href="#pn" x="376.0" y="452.9"/>
<use href="#pn" x="361.6" y="453.0"/>
<use href="#pn" x="325.3" y="453.2"/>
<use href="#pn" x="311.6" y="453.2"/>
<use href="#pn" x="349.6" y="453.8"/>
<use href="#pn" x="316.0" y="454.1"/>
<use href="#pn" x="323.0" y="454.1"/>
<use href="#pn" x="325.5" y="454.2"/>
<use href="#pn" x="345.9" y="454.2"/>
<use href="#pn" x="373.7" y="454.3"/>
<use href="#pn" x="308.9" y="454.3"/>
<use href="#pn" x="310.1" y="454.5"/>
<use href="#pn" x="319.2" y="454.5"/>
<use href="#pn" x="369.0" y="454.8"/>
<use href="#pn" x="341.5" y="454.8"/>
<use href="#pn" x="359.2" y="454.9"/>
<use href="#pn" x="356.4" y="455.0"/>
<use href="#pn" x="361.0" y="455.3"/>
<use href="#pn" x="343.1" y="455.4"/>
<use href="#pn" x="330.1" y="455.6"/>
<use href="#pn" x="364.7" y="455.6"/>
<use href="#pn" x="371.1" y="455.6"/>
<use href="#pn" x="352.6" y="455.8"/>
<use href="#pn" x="314.4" y="455.9"/>
<use href="#pn" x="377.5" y="456.0"/>
<use href="#pn" x="330.9" y="456.2"/>
<use href="#pn" x="367.5" y="456.8"/>
<use href="#pn" x="314.2" y="457.4"/>
<use href="#pn" x="379.5" y="457.4"/>
<use href="#pn" x="329.6" y="457.7"/>
<use href="#pn" x="370.3" y="457.7"/>
<use href="#pn" x="320.2" y="457.8"/>
<use href="#pn" x="372.6" y="457.8"/>
<use href="#pn" x="306.9" y="457.8"/>
<use href="#pn" x="316.7" y="457.9"/>
<use href="#pn" x="342.0" y="458.0"/>
<use href="#pn" x="353.8" y="458.1"/>
<use href="#pn" x="333.7" y="458.1"/>
<use href="#pn" x="342.9" y="458.2"/>
<use href="#pn" x="349.9" y="458.4"/>
<use href="#pn" x="325.1" y="458.4"/>
<use href="#pn" x="358.1" y="458.5"/>
<use href="#pn" x="376.7" y="458.5"/>
<use href="#pn" x="311.6" y="458.6"/>
<use href="#pn" x="347.0" y="458.6"/>
<use href="#pn" x="361.6" y="458.7"/>
<use href="#pn" x="337.0" y="458.7"/>
<use href="#pn" x="323.4" y="459.1"/>
<use href="#pn" x="355.7" y="459.2"/>
<use href="#pn" x="331.9" y="459.2"/>
<use href="#pn" x="363.9" y="459.3"/>
<use href="#pn" x="374.2" y="459.7"/>
<use href="#pn" x="332.0" y="460.0"/>
<use href="#pn" x="343.7" y="460.2"/>
<use href="#pn" x="307.6" y="460.3"/>
<use href="#pn" x="349.3" y="460.3"/>
<use href="#pn" x="380.3" y="460.4"/>
<use href="#pn" x="340.6" y="460.4"/>
<use href="#pn" x="338.8" y="460.4"/>
<use href="#pn" x="328.8" y="460.5"/>
<use href="#pn" x="335.8" y="460.6"/>
<use href="#pn" x="359.3" y="460.6"/>
<use href="#pn" x="352.4" y="460.9"/>
<use href="#pn" x="316.8" y="461.2"/>
<use href="#pn" x="314.7" y="461.3"/>
<use href="#pn" x="355.7" y="461.4"/>
<use href="#pn" x="322.5" y="461.4"/>
<use href="#pn" x="345.6" y="461.6"/>
<use href="#pn" x="309.9" y="461.7"/>
<use href="#pn" x="369.0" y="461.7"/>
<use href="#pn" x="326.7" y="461.8"/>
<use href="#pn" x="363.7" y="461.9"/>
<use href="#pn" x="370.0" y="461.9"/>
<use href="#pn" x="363.0" y="461.9"/>
<use href="#pn" x="375.6" y="462.2"/>
<use href="#pn" x="319.2" y="462.2"/>
<use href="#pn" x="380.9" y="462.8"/>
<use href="#pn" x="337.9" y="462.9"/>
<use href="#pn" x="363.1" y="462.9"/>
<use href="#pn" x="334.2" y="463.1"/>
<use href="#pn" x="340.8" y="463.1"/>
<use href="#pn" x="332.0" y="463.4"/>
<use href="#pn" x="358.6" y="463.8"/>
<use href="#pn" x="376.9" y="464.0"/>
<use href="#pn" x="343.9" y="464.0"/>
<use href="#pn" x="352.8" y="464.2"/>
<use href="#pn" x="366.7" y="464.3"/>
<use href="#pn" x="365.3" y="464.4"/>
<use href="#pn" x="322.1" y="464.5"/>
<use href="#pn" x="326.0" y="464.6"/>
<use href="#pn" x="314.2" y="464.7"/>
<use href="#pn" x="309.0" y="464.8"/>
<use href="#pn" x="320.6" y="464.9"/>
<use href="#pn" x="356.3" y="464.9"/>
<use href="#pn" x="348.6" y="464.9"/>
<use href="#pn" x="347.0" y="464.9"/>
<use href="#pn" x="328.7" y="465.0"/>
<use href="#pn" x="310.0" y="465.0"/>
<use href="#pn" x="317.3" y="465.0"/>
<use href="#pn" x="371.4" y="465.1"/>
<use href="#pn" x="373.5" y="465.3"/>
<use href="#pn" x="376.1" y="465.8"/>
<use href="#pn" x="374.6" y="466.0"/>
<use href="#pn" x="348.6" y="466.2"/>
<use href="#pn" x="368.4" y="466.3"/>
<use href="#pn" x="322.9" y="466.4"/>
<use href="#pn" x="317.7" y="466.5"/>
<use href="#pn" x="345.7" y="466.5"/>
<use href="#pn" x="331.5" y="466.5"/>
<use href="#pn" x="320.8" y="466.7"/>
<use href="#pn" x="310.1" y="466.8"/>
<use href="#pn" x="371.3" y="466.9"/>
<use href="#pn" x="344.9" y="467.1"/>
<use href="#pn" x="313.7" y="467.1"/>
<use href="#pn" x="334.4" y="467.2"/>
<use href="#pn" x="365.4" y="467.3"/>
<use href="#pn" x="354.0" y="467.3"/>
<use href="#pn" x="360.0" y="467.3"/>
<use href="#pn" x="362.2" y="467.3"/>
<use href="#pn" x="339.7" y="467.6"/>
<use href="#pn" x="308.0" y="467.7"/>
<use href="#pn" x="338.3" y="467.7"/>
<use href="#pn" x="356.3" y="467.8"/>
<use href="#pn" x="329.3" y="467.8"/>
<use href="#pn" x="380.6" y="468.1"/>
<use href="#pn" x="325.9" y="468.2"/>
<use href="#pn" x="343.0" y="468.7"/>
<use href="#pn" x="354.9" y="468.7"/>
<use href="#pn" x="371.5" y="468.9"/>
<use href="#pn" x="337.7" y="469.0"/>
<use href="#pn" x="318.7" y="469.0"/>
<use href="#pn" x="362.5" y="469.2"/>
<use href="#pn" x="341.3" y="469.3"/>
<use href="#pn" x="359.5" y="469.3"/>
<use href="#pn" x="327.6" y="469.7"/>
<use href="#pn" x="307.4" y="469.8"/>
<use href="#pn" x="310.4" y="469.8"/>
<use href="#pn" x="327.0" y="469.9"/>
<use href="#pn" x="336.2" y="469.9"/>
<use href="#pn" x="315.7" y="470.2"/>
<use href="#pn" x="323.7" y="470.2"/>
<use href="#pn" x="345.6" y="470.5"/>
<use href="#pn" x="374.2" y="470.5"/>
<use href="#pn" x="363.7" y="470.7"/>
<use href="#pn" x="368.5" y="470.9"/>
<use href="#pn" x="351.8" y="471.0"/>
<use href="#pn" x="376.8" y="471.1"/>
<use href="#pn" x="314.3" y="471.1"/>
<use href="#pn" x="332.1" y="471.1"/>
<use href="#pn" x="379.3" y="471.2"/>
<use href="#pn" x="348.9" y="471.2"/>
<use href="#pn" x="313.9" y="471.9"/>
<use href="#pn" x="366.6" y="472.4"/>
<use href="#pn" x="383.1" y="472.4"/>
<use href="#pn" x="365.7" y="472.4"/>
<use href="#pn" x="338.1" y="472.5"/>
<use href="#pn" x="353.2" y="472.5"/>
<use href="#pn" x="329.2" y="472.8"/>
<use href="#pn" x="316.6" y="473.2"/>
<use href="#pn" x="370.7" y="473.2"/>
<use href="#pn" x="346.5" y="473.3"/>
<use href="#pn" x="325.5" y="473.4"/>
<use href="#pn" x="319.7" y="473.5"/>
<use href="#pn" x="358.6" y="473.5"/>
<use href="#pn" x="336.1" y="473.7"/>
<use href="#pn" x="331.6" y="473.7"/>
<use href="#pn" x="322.0" y="473.8"/>
<use href="#pn" x="344.4" y="473.9"/>
<use href="#pn" x="351.1" y="473.9"/>
<use href="#pn" x="375.7" y="473.9"/>
<use href="#pn" x="310.0" y="473.9"/>
<use href="#pn" x="380.7" y="474.0"/>
<use href="#pn" x="374.7" y="474.0"/>
<use href="#pn" x="355.7" y="474.0"/>
<use href="#pn" x="362.2" y="474.0"/>
<use href="#pn" x="339.8" y="474.2"/>
<use href="#pn" x="374.0" y="474.8"/>
<use href="#pn" x="358.0" y="474.8"/>
<use href="#pn" x="368.6" y="475.1"/>
<use href="#pn" x="346.1" y="475.2"/>
<use href="#pn" x="322.8" y="475.2"/>
<use href="#pn" x="335.6" y="475.3"/>
<use href="#pn" x="318.0" y="475.3"/>
<use href="#pn" x="383.1" y="475.4"/>
<use href="#pn" x="371.2" y="475.6"/>
<use href="#pn" x="363.2" y="475.7"/>
<use href="#pn" x="329.7" y="475.9"/>
<use href="#pn" x="380.9" y="476.0"/>
<use href="#pn" x="355.6" y="476.0"/>
<use href="#pn" x="341.9" y="476.1"/>
<use href="#pn" x="352.5" y="476.2"/>
<use href="#pn" x="343.8" y="476.2"/>
<use href="#pn" x="363.9" y="476.3"/>
<use href="#pn" x="320.2" y="476.5"/>
<use href="#pn" x="349.1" y="476.5"/>
<use href="#pn" x="313.1" y="476.7"/>
<use href="#pn" x="325.3" y="476.7"/>
<use href="#pn" x="311.0" y="476.8"/>
<use href="#pn" x="330.8" y="476.8"/>
<use href="#pn" x="338.1" y="477.0"/>
<use href="#pn" x="375.7" y="477.3"/>
<use href="#pn" x="310.3" y="477.8"/>
<use href="#pn" x="349.2" y="477.8"/>
<use href="#pn" x="359.8" y="477.8"/>
<use href="#pn" x="315.8" y="477.8"/>
<use href="#pn" x="327.0" y="477.9"/>
<use href="#pn" x="382.3" y="478.0"/>
<use href="#pn" x="366.7" y="478.1"/>
<use href="#pn" x="343.8" y="478.1"/>
<use href="#pn" x="385.9" y="478.1"/>
<use href="#pn" x="313.1" y="478.2"/>
<use href="#pn" x="374.4" y="478.5"/>
<use href="#pn" x="378.9" y="478.5"/>
<use href="#pn" x="352.3" y="478.6"/>
<use href="#pn" x="341.3" y="478.7"/>
<use href="#pn" x="329.2" y="478.7"/>
<use href="#pn" x="334.3" y="479.2"/>
<use href="#pn" x="362.6" y="479.5"/>
<use href="#pn" x="377.1" y="479.7"/>
<use href="#pn" x="320.0" y="480.0"/>
<use href="#pn" x="356.9" y="480.1"/>
<use href="#pn" x="371.6" y="480.1"/>
<use href="#pn" x="322.8" y="480.2"/>
<use href="#pn" x="338.3" y="480.2"/>
<use href="#pn" x="330.9" y="480.2"/>
<use href="#pn" x="365.3" y="480.3"/>
<use href="#pn" x="348.1" y="480.3"/>
<use href="#pn" x="340.2" y="480.8"/>
<use href="#pn" x="338.2" y="481.1"/>
<use href="#pn" x="311.5" y="481.2"/>
<use href="#pn" x="376.3" y="481.2"/>
<use href="#pn" x="371.3" y="481.2"/>
<use href="#pn" x="352.0" y="481.4"/>
<use href="#pn" x="373.8" y="481.4"/>
<use href="#pn" x="384.9" y="481.5"/>
<use href="#pn" x="356.8" y="481.6"/>
<use href="#pn" x="331.8" y="481.6"/>
<use href="#pn" x="349.3" y="481.8"/>
<use href="#pn" x="322.0" y="481.9"/>
<use href="#pn" x="335.7" y="481.9"/>
<use href="#pn" x="358.0" y="482.0"/>
<use href="#pn" x="344.5" y="482.1"/>
<use href="#pn" x="329.8" y="482.3"/>
<use href="#pn" x="346.0" y="483.0"/>
<use href="#pn" x="320.9" y="483.0"/>
<use href="#pn" x="366.7" y="483.0"/>
<use href="#pn" x="361.4" y="483.0"/>
<use href="#pn" x="384.2" y="483.1"/>
<use href="#pn" x="312.7" y="483.1"/>
<use href="#pn" x="324.9" y="483.1"/>
<use href="#pn" x="316.2" y="483.1"/>
<use href="#pn" x="363.9" y="483.2"/>
<use href="#pn" x="379.5" y="483.3"/>
<use href="#pn" x="316.0" y="483.7"/>
<use href="#pn" x="367.9" y="483.7"/>
<use href="#pn" x="312.1" y="483.7"/>
<use href="#pn" x="359.5" y="483.8"/>
<use href="#pn" x="352.1" y="483.9"/>
<use href="#pn" x="336.8" y="483.9"/>
<use href="#pn" x="329.1" y="484.1"/>
<use href="#pn" x="379.6" y="484.1"/>
<use href="#pn" x="335.5" y="484.2"/>
<use href="#pn" x="343.3" y="484.2"/>
<use href="#pn" x="327.0" y="484.3"/>
<use href="#pn" x="374.9" y="484.4"/>
<use href="#pn" x="362.7" y="484.6"/>
<use href="#pn" x="314.7" y="484.6"/>
<use href="#pn" x="356.5" y="484.8"/>
<use href="#pn" x="322.1" y="484.8"/>
<use href="#pn" x="372.0" y="484.9"/>
<use href="#pn" x="341.2" y="485.0"/>
<use href="#pn" x="384.6" y="485.1"/>
<use href="#pn" x="320.8" y="485.1"/>
<use href="#pn" x="350.7" y="485.2"/>
<use href="#pn" x="382.6" y="485.2"/>
<use href="#pn" x="347.2" y="485.5"/>
<use href="#pn" x="331.1" y="485.7"/>
<use href="#pn" x="376.1" y="485.9"/>
<use href="#pn" x="329.0" y="486.8"/>
<use href="#pn" x="339.7" y="487.0"/>
<use href="#pn" x="334.1" y="487.0"/>
<use href="#pn" x="353.4" y="487.0"/>
<use href="#pn" x="357.7" y="487.0"/>
<use href="#pn" x="377.5" y="487.1"/>
<use href="#pn" x="344.4" y="487.2"/>
<use href="#pn" x="333.1" y="487.3"/>
<use href="#pn" x="382.6" y="487.8"/>
<use href="#pn" x="324.1" y="488.0"/>
<use href="#pn" x="350.1" y="488.1"/>
<use href="#pn" x="325.9" y="488.1"/>
<use href="#pn" x="373.0" y="488.2"/>
<use href="#pn" x="345.6" y="488.3"/>
<use href="#pn" x="313.4" y="488.5"/>
<use href="#pn" x="356.9" y="488.6"/>
<use href="#pn" x="316.6" y="488.7"/>
<use href="#pn" x="337.3" y="488.8"/>
<use href="#pn" x="371.1" y="488.9"/>
<use href="#pn" x="311.7" y="489.0"/>
<use href="#pn" x="318.8" y="489.0"/>
<use href="#pn" x="380.7" y="489.1"/>
<use href="#pn" x="353.9" y="489.8"/>
<use href="#pn" x="335.0" y="489.9"/>
<use href="#pn" x="339.7" y="490.1"/>
<use href="#pn" x="386.0" y="490.1"/>
<use href="#pn" x="356.3" y="490.4"/>
<use href="#pn" x="359.4" y="490.4"/>
<use href="#pn" x="372.1" y="490.4"/>
<use href="#pn" x="310.2" y="490.6"/>
<use href="#pn" x="332.2" y="490.6"/>
<use href="#pn" x="328.2" y="490.8"/>
<use href="#pn" x="368.0" y="490.8"/>
<use href="#pn" x="382.3" y="490.9"/>
<use href="#pn" x="337.7" y="491.0"/>
<use href="#pn" x="381.1" y="491.0"/>
<use href="#pn" x="321.7" y="491.0"/>
<use href="#pn" x="375.9" y="491.2"/>
<use href="#pn" x="348.0" y="491.3"/>
<use href="#pn" x="373.4" y="491.4"/>
<use href="#pn" x="345.1" y="491.7"/>
<use href="#pn" x="320.7" y="491.9"/>
<use href="#pn" x="350.7" y="492.0"/>
<use href="#pn" x="317.7" y="492.1"/>
<use href="#pn" x="327.1" y="492.1"/>
<use href="#pn" x="313.7" y="492.3"/>
<use href="#pn" x="355.0" y="492.9"/>
<use href="#pn" x="344.8" y="493.3"/>
<use href="#pn" x="331.4" y="493.3"/>
<use href="#pn" x="310.3" y="493.3"/>
<use href="#pn" x="373.0" y="493.6"/>
<use href="#pn" x="339.6" y="493.6"/>
<use href="#pn" x="307.4" y="493.8"/>
<use href="#pn" x="329.2" y="493.9"/>
<use href="#pn" x="347.0" y="494.0"/>
<use href="#pn" x="334.2" y="494.0"/>
<use href="#pn" x="383.7" y="494.0"/>
<use href="#pn" x="312.8" y="494.1"/>
<use href="#pn" x="325.8" y="494.1"/>
<use href="#pn" x="337.6" y="494.2"/>
<use href="#pn" x="317.8" y="494.3"/>
<use href="#pn" x="320.1" y="494.4"/>
<use href="#pn" x="376.5" y="494.5"/>
<use href="#pn" x="322.1" y="494.5"/>
<use href="#pn" x="372.1" y="494.6"/>
<use href="#pn" x="352.4" y="494.7"/>
<use href="#pn" x="380.2" y="494.9"/>
<use href="#pn" x="349.3" y="495.3"/>
<use href="#pn" x="314.9" y="495.7"/>
<use href="#pn" x="369.6" y="495.8"/>
<use href="#pn" x="356.1" y="495.9"/>
<use href="#pn" x="312.0" y="496.0"/>
<use href="#pn" x="335.5" y="496.5"/>
<use href="#pn" x="349.1" y="496.5"/>
<use href="#pn" x="340.6" y="496.5"/>
<use href="#pn" x="329.2" y="496.7"/>
<use href="#pn" x="323.1" y="496.8"/>
<use href="#pn" x="346.9" y="496.9"/>
<use href="#pn" x="331.8" y="496.9"/>
<use href="#pn" x="305.6" y="496.9"/>
<use href="#pn" x="374.1" y="497.0"/>
<use href="#pn" x="382.9" y="497.0"/>
<use href="#pn" x="337.6" y="497.1"/>
<use href="#pn" x="352.0" y="497.2"/>
<use href="#pn" x="317.6" y="497.2"/>
<use href="#pn" x="308.6" y="497.5"/>
<use href="#pn" x="378.0" y="497.7"/>
<use href="#pn" x="344.6" y="497.9"/>
<use href="#pn" x="326.6" y="498.0"/>
<use href="#pn" x="319.9" y="498.2"/>
<use href="#pn" x="380.0" y="498.3"/>
<use href="#pn" x="340.9" y="499.0"/>
<use href="#pn" x="358.1" y="499.2"/>
<use href="#pn" x="383.3" y="499.2"/>
<use href="#pn" x="352.0" y="499.5"/>
<use href="#pn" x="375.6" y="499.5"/>
<use href="#pn" x="312.9" y="499.7"/>
<use href="#pn" x="350.9" y="499.8"/>
<use href="#pn" x="324.1" y="500.0"/>
<use href="#pn" x="355.9" y="500.0"/>
<use href="#pn" x="311.4" y="500.1"/>
<use href="#pn" x="316.6" y="500.2"/>
<use href="#pn" x="380.8" y="500.2"/>
<use href="#pn" x="325.7" y="500.3"/>
<use href="#pn" x="344.9" y="500.5"/>
<use href="#pn" x="373.4" y="500.5"/>
<use href="#pn" x="339.1" y="500.8"/>
<use href="#pn" x="320.1" y="501.0"/>
<use href="#pn" x="307.5" y="501.2"/>
<use href="#pn" x="347.7" y="501.3"/>
<use href="#pn" x="317.6" y="502.0"/>
<use href="#pn" x="312.9" y="502.1"/>
<use href="#pn" x="318.9" y="502.1"/>
<use href="#pn" x="380.5" y="502.3"/>
<use href="#pn" x="344.1" y="502.6"/>
<use href="#pn" x="346.8" y="502.7"/>
<use href="#pn" x="376.2" y="502.7"/>
<use href="#pn" x="311.1" y="502.8"/>
<use href="#pn" x="355.7" y="503.3"/>
<use href="#pn" x="323.0" y="503.8"/>
<use href="#pn" x="382.4" y="504.0"/>
<use href="#pn" x="348.7" y="504.0"/>
<use href="#pn" x="339.9" y="504.1"/>
<use href="#pn" x="353.1" y="504.2"/>
<use href="#pn" x="308.0" y="504.3"/>
<use href="#pn" x="319.6" y="504.9"/>
<use href="#pn" x="314.1" y="505.0"/>
<use href="#pn" x="380.9" y="505.0"/>
<use href="#pn" x="344.8" y="505.0"/>
<use href="#pn" x="350.7" y="505.1"/>
<use href="#pn" x="307.5" y="505.2"/>
<use href="#pn" x="377.2" y="505.3"/>
<use href="#pn" x="312.1" y="505.5"/>
<use href="#pn" x="317.0" y="505.7"/>
<use href="#pn" x="382.9" y="506.1"/>
<use href="#pn" x="352.5" y="506.6"/>
<use href="#pn" x="346.8" y="506.9"/>
<use href="#pn" x="355.6" y="507.2"/>
<use href="#pn" x="356.4" y="508.3"/>
<use href="#pn" x="342.9" y="508.4"/>
<use href="#pn" x="378.7" y="508.5"/>
<use href="#pn" x="350.3" y="508.6"/>
<use href="#pn" x="352.7" y="509.4"/>
<use href="#pn" x="345.7" y="509.5"/>
<use href="#pn" x="345.1" y="511.8"/>
<use href="#pn" x="348.0" y="512.5"/>
<use href="#pin" x="373.1" y="425.0"/>
<use href="#pin" x="391.0" y="426.4"/>
<use href="#pin" x="391.6" y="426.8"/>
<use href="#pin" x="348.1" y="428.3"/>
<use href="#pin" x="364.6" y="430.3"/>
<use href="#pin" x="351.4" y="437.1"/>
<use href="#pin" x="366.7" y="437.9"/>
<use href="#pin" x="320.6" y="439.3"/>
<use href="#pin" x="384.6" y="439.3"/>
<use href="#pin" x="384.5" y="439.5"/>
<use href="#pin" x="345.3" y="445.7"/>
<use href="#pin" x="350.6" y="446.1"/>
<use href="#pin" x="62.3" y="448.5"/>
<use href="#pin" x="351.4" y="450.7"/>
<use href="#pin" x="378.6" y="452.1"/>
<use href="#pin" x="378.5" y="452.2"/>
<use href="#pin" x="345.6" y="452.9"/>
<use href="#pin" x="354.1" y="457.9"/>
<use href="#pin" x="367.0" y="459.7"/>
<use href="#pin" x="306.7" y="461.4"/>
<use href="#pin" x="392.4" y="465.4"/>
<use href="#pin" x="392.4" y="465.7"/>
<use href="#pin" x="310.7" y="466.4"/>
<use href="#pin" x="109.0" y="467.5"/>
<use href="#pin" x="76.7" y="468.0"/>
<use href="#pin" x="113.1" y="468.3"/>
<use href="#pin" x="116.0" y="469.0"/>
<use href="#pin" x="53.8" y="469.2"/>
<use href="#pin" x="321.7" y="470.0"/>
<use href="#pin" x="55.5" y="471.5"/>
<use href="#pin" x="166.7" y="471.5"/>
<use href="#pin" x="383.1" y="471.7"/>
<use href="#pin" x="315.0" y="472.1"/>
<use href="#pin" x="383.1" y="472.1"/>
<use href="#pin" x="333.1" y="472.9"/>
<use href="#pin" x="471.8" y="473.4"/>
<use href="#pin" x="103.8" y="474.2"/>
<use href="#pin" x="111.4" y="475.9"/>
<use href="#pin" x="308.6" y="476.9"/>
<use href="#pin" x="384.6" y="476.9"/>
<use href="#pin" x="53.8" y="477.6"/>
<use href="#pin" x="117.4" y="477.6"/>
<use href="#pin" x="321.4" y="478.6"/>
<use href="#pin" x="167.0" y="479.0"/>
<use href="#pin" x="64.0" y="479.3"/>
<use href="#pin" x="80.4" y="479.7"/>
<use href="#pin" x="314.3" y="480.3"/>
<use href="#pin" x="157.4" y="481.0"/>
<use href="#pin" x="163.6" y="481.4"/>
<use href="#pin" x="152.0" y="482.0"/>
<use href="#pin" x="169.2" y="482.7"/>
<use href="#pin" x="343.4" y="482.9"/>
<use href="#pin" x="172.0" y="483.0"/>
<use href="#pin" x="369.3" y="483.3"/>
<use href="#pin" x="119.9" y="483.6"/>
<use href="#pin" x="146.0" y="484.0"/>
<use href="#pin" x="161.0" y="484.0"/>
<use href="#pin" x="104.6" y="484.7"/>
<use href="#pin" x="111.9" y="485.3"/>
<use href="#pin" x="175.2" y="485.3"/>
<use href="#pin" x="138.7" y="485.6"/>
<use href="#pin" x="138.9" y="485.8"/>
<use href="#pin" x="165.0" y="486.0"/>
<use href="#pin" x="386.7" y="486.0"/>
<use href="#pin" x="58.9" y="486.1"/>
<use href="#pin" x="386.5" y="486.1"/>
<use href="#pin" x="156.0" y="487.0"/>
<use href="#pin" x="171.0" y="487.0"/>
<use href="#pin" x="311.7" y="487.1"/>
<use href="#pin" x="337.9" y="487.1"/>
<use href="#pin" x="361.4" y="487.6"/>
<use href="#pin" x="603.0" y="488.2"/>
<use href="#pin" x="608.6" y="488.2"/>
<use href="#pin" x="319.6" y="488.6"/>
<use href="#pin" x="159.6" y="489.0"/>
<use href="#pin" x="174.0" y="489.0"/>
<use href="#pin" x="149.9" y="489.2"/>
<use href="#pin" x="150.1" y="489.3"/>
<use href="#pin" x="141.0" y="490.0"/>
<use href="#pin" x="153.0" y="490.0"/>
<use href="#pin" x="168.0" y="490.7"/>
<use href="#pin" x="583.7" y="490.8"/>
<use href="#pin" x="590.8" y="490.8"/>
<use href="#pin" x="133.0" y="492.0"/>
<use href="#pin" x="147.0" y="492.0"/>
<use href="#pin" x="162.0" y="492.0"/>
<use href="#pin" x="418.4" y="492.0"/>
<use href="#pin" x="52.1" y="492.9"/>
<use href="#pin" x="78.7" y="492.9"/>
<use href="#pin" x="163.0" y="493.0"/>
<use href="#pin" x="352.4" y="493.1"/>
<use href="#pin" x="123.3" y="493.2"/>
<use href="#pin" x="104.6" y="493.7"/>
<use href="#pin" x="158.0" y="494.0"/>
<use href="#pin" x="477.4" y="494.1"/>
<use href="#pin" x="150.0" y="495.0"/>
<use href="#pin" x="356.3" y="495.3"/>
<use href="#pin" x="112.3" y="495.4"/>
<use href="#pin" x="154.0" y="495.4"/>
<use href="#pin" x="356.5" y="495.6"/>
<use href="#pin" x="588.8" y="495.7"/>
<use href="#pin" x="136.0" y="496.0"/>
<use href="#pin" x="166.0" y="496.0"/>
<use href="#pin" x="143.0" y="496.6"/>
<use href="#pin" x="394.6" y="496.8"/>
<use href="#pin" x="586.0" y="497.0"/>
<use href="#pin" x="130.2" y="497.1"/>
<use href="#pin" x="143.1" y="497.1"/>
<use href="#pin" x="317.1" y="497.6"/>
<use href="#pin" x="317.2" y="497.6"/>
<use href="#pin" x="332.4" y="497.6"/>
<use href="#pin" x="332.8" y="497.6"/>
<use href="#pin" x="130.9" y="498.0"/>
<use href="#pin" x="397.2" y="498.3"/>
<use href="#pin" x="160.7" y="498.6"/>
<use href="#pin" x="396.8" y="498.6"/>
<use href="#pin" x="149.0" y="499.0"/>
<use href="#pin" x="157.0" y="499.0"/>
<use href="#pin" x="57.2" y="499.7"/>
<use href="#pin" x="134.3" y="499.7"/>
<use href="#pin" x="582.3" y="499.7"/>
<use href="#pin" x="134.1" y="500.0"/>
<use href="#pin" x="370.6" y="500.0"/>
<use href="#pin" x="370.4" y="500.2"/>
<use href="#pin" x="89.4" y="501.0"/>
<use href="#pin" x="144.0" y="501.0"/>
<use href="#pin" x="304.9" y="501.1"/>
<use href="#pin" x="154.6" y="501.4"/>
<use href="#pin" x="304.0" y="501.5"/>
<use href="#pin" x="155.7" y="502.0"/>
<use href="#pin" x="326.0" y="502.2"/>
<use href="#pin" x="326.0" y="502.4"/>
<use href="#pin" x="126.0" y="502.5"/>
<use href="#pin" x="126.7" y="502.7"/>
<use href="#pin" x="340.6" y="502.9"/>
<use href="#pin" x="580.0" y="503.0"/>
<use href="#pin" x="340.4" y="503.2"/>
<use href="#pin" x="120.7" y="503.4"/>
<use href="#pin" x="138.7" y="503.4"/>
<use href="#pin" x="139.4" y="503.4"/>
<use href="#pin" x="571.0" y="503.6"/>
<use href="#pin" x="56.3" y="503.9"/>
<use href="#pin" x="384.1" y="503.9"/>
<use href="#pin" x="577.7" y="504.0"/>
<use href="#pin" x="384.5" y="504.1"/>
<use href="#pin" x="376.0" y="504.3"/>
<use href="#pin" x="384.1" y="504.3"/>
<use href="#pin" x="604.0" y="504.6"/>
<use href="#pin" x="376.3" y="504.7"/>
<use href="#pin" x="376.8" y="504.7"/>
<use href="#pin" x="147.0" y="505.0"/>
<use href="#pin" x="151.0" y="505.0"/>
<use href="#pin" x="562.5" y="505.6"/>
<use href="#pin" x="307.7" y="505.7"/>
<use href="#pin" x="83.5" y="506.1"/>
<use href="#pin" x="307.9" y="506.1"/>
<use href="#pin" x="317.2" y="506.6"/>
<use href="#pin" x="549.7" y="506.6"/>
<use href="#pin" x="317.1" y="506.7"/>
<use href="#pin" x="58.0" y="507.0"/>
<use href="#pin" x="575.0" y="507.0"/>
<use href="#pin" x="608.0" y="507.6"/>
<use href="#pin" x="347.7" y="507.8"/>
<use href="#pin" x="545.0" y="508.0"/>
<use href="#pin" x="566.0" y="508.0"/>
<use href="#pin" x="347.7" y="508.1"/>
<use href="#pin" x="583.7" y="508.6"/>
<use href="#pin" x="152.3" y="509.3"/>
<use href="#pin" x="547.7" y="509.5"/>
<use href="#pin" x="554.6" y="509.5"/>
<use href="#pin" x="629.7" y="509.6"/>
<use href="#pin" x="60.6" y="509.8"/>
<use href="#pin" x="153.0" y="509.8"/>
<use href="#pin" x="292.9" y="509.8"/>
<use href="#pin" x="356.5" y="510.0"/>
<use href="#pin" x="356.7" y="510.0"/>
<use href="#pin" x="558.0" y="510.0"/>
<use href="#pin" x="572.4" y="510.5"/>
<use href="#pin" x="146.7" y="511.0"/>
<use href="#pin" x="633.7" y="511.1"/>
<use href="#pin" x="394.6" y="511.2"/>
<use href="#pin" x="381.4" y="511.4"/>
<use href="#pin" x="147.0" y="511.5"/>
<use href="#pin" x="618.9" y="511.5"/>
<use href="#pin" x="624.4" y="511.5"/>
<use href="#pin" x="381.4" y="511.7"/>
<use href="#pin" x="381.1" y="512.0"/>
<use href="#pin" x="396.7" y="512.0"/>
<use href="#pin" x="552.0" y="512.0"/>
<use href="#pin" x="578.0" y="512.0"/>
<use href="#pin" x="399.6" y="512.1"/>
<use href="#pin" x="63.0" y="514.0"/>
<use href="#pin" x="141.6" y="514.4"/>
<use href="#pin" x="141.9" y="514.9"/>
<use href="#pin" x="346.0" y="515.0"/>
<use href="#pin" x="569.0" y="515.0"/>
<use href="#pin" x="346.0" y="515.1"/>
<use href="#pin" x="561.9" y="515.5"/>
<use href="#pin" x="66.0" y="517.0"/>
<use href="#pin" x="582.9" y="517.1"/>
<use href="#pin" x="555.6" y="517.5"/>
<use href="#pin" x="576.0" y="519.0"/>
<use href="#pin" x="550.1" y="519.4"/>
<use href="#pin" x="69.1" y="519.5"/>
<use href="#pin" x="560.0" y="520.0"/>
<use href="#pin" x="81.4" y="520.7"/>
<use href="#pin" x="571.0" y="521.0"/>
<use href="#pin" x="103.8" y="521.7"/>
<use href="#pin" x="563.9" y="522.4"/>
<use href="#pin" x="589.2" y="523.4"/>
<use href="#pin" x="121.9" y="523.7"/>
<use href="#pin" x="138.2" y="523.7"/>
<use href="#pin" x="72.0" y="524.0"/>
<use href="#pin" x="556.0" y="524.0"/>
<use href="#pin" x="137.9" y="524.1"/>
<use href="#pin" x="115.2" y="525.4"/>
<use href="#pin" x="535.4" y="525.4"/>
<use href="#pin" x="535.6" y="525.5"/>
<use href="#pin" x="143.5" y="525.8"/>
<use href="#pin" x="143.6" y="525.8"/>
<use href="#pin" x="107.5" y="526.3"/>
<use href="#pin" x="568.4" y="526.4"/>
<use href="#pin" x="81.4" y="526.8"/>
<use href="#pin" x="558.6" y="527.3"/>
<use href="#pin" x="579.7" y="527.9"/>
<use href="#pin" x="494.9" y="528.9"/>
<use href="#pin" x="573.4" y="528.9"/>
<use href="#pin" x="540.8" y="529.3"/>
<use href="#pin" x="565.0" y="530.0"/>
<use href="#pin" x="75.3" y="530.8"/>
<use href="#pin" x="92.4" y="532.2"/>
<use href="#pin" x="544.7" y="533.3"/>
<use href="#pin" x="559.5" y="533.3"/>
<use href="#pin" x="606.4" y="533.7"/>
<use href="#pin" x="85.2" y="533.9"/>
<use href="#pin" x="553.0" y="534.0"/>
<use href="#pin" x="587.2" y="534.3"/>
<use href="#pin" x="78.7" y="535.9"/>
<use href="#pin" x="548.0" y="536.0"/>
<use href="#pin" x="593.6" y="536.2"/>
<use href="#pin" x="87.0" y="537.0"/>
<use href="#pin" x="507.4" y="537.0"/>
<use href="#pin" x="541.0" y="537.0"/>
<use href="#pin" x="411.3" y="538.6"/>
<use href="#pin" x="590.8" y="539.2"/>
<use href="#pin" x="95.3" y="539.8"/>
<use href="#pin" x="103.5" y="539.8"/>
<use href="#pin" x="544.0" y="540.0"/>
<use href="#pin" x="551.0" y="540.0"/>
<use href="#pin" x="83.8" y="541.0"/>
<use href="#pin" x="90.6" y="541.2"/>
<use href="#pin" x="555.6" y="542.2"/>
<use href="#pin" x="540.0" y="543.0"/>
<use href="#pin" x="576.4" y="544.2"/>
<use href="#pin" x="100.4" y="544.4"/>
<use href="#pin" x="411.3" y="544.7"/>
<use href="#pin" x="549.7" y="544.7"/>
<use href="#pin" x="93.0" y="545.0"/>
<use href="#pin" x="546.0" y="545.0"/>
<use href="#pin" x="109.2" y="545.8"/>
<use href="#pin" x="98.0" y="546.0"/>
<use href="#pin" x="543.0" y="546.0"/>
<use href="#pin" x="128.4" y="547.1"/>
<use href="#pin" x="106.0" y="548.0"/>
<use href="#pin" x="101.8" y="550.0"/>
<use href="#pin" x="124.0" y="551.0"/>
<use href="#pin" x="566.5" y="551.1"/>
<use href="#pin" x="109.2" y="551.2"/>
<use href="#pin" x="541.9" y="551.5"/>
<use href="#pin" x="96.2" y="551.7"/>
<use href="#pin" x="542.1" y="552.1"/>
<use href="#pin" x="114.3" y="552.2"/>
<use href="#pin" x="128.0" y="553.4"/>
<use href="#pin" x="117.0" y="554.0"/>
<use href="#pin" x="103.5" y="555.6"/>
<use href="#pin" x="120.2" y="556.4"/>
<use href="#pin" x="111.4" y="558.8"/>
<use href="#pin" x="496.3" y="565.7"/>
<use href="#pin" x="136.0" y="566.7"/>
<use href="#pin" x="492.2" y="566.8"/>
<use href="#pin" x="135.2" y="567.3"/>
<use href="#pin" x="138.5" y="570.0"/>
<use href="#pin" x="139.7" y="570.8"/>
<use href="#pin" x="149.2" y="574.1"/>
<use href="#pin" x="148.7" y="575.6"/>
<use href="#pin" x="143.1" y="575.8"/>
<use href="#pin" x="142.4" y="576.9"/>
<use href="#pin" x="547.0" y="580.0"/>
<use href="#pin" x="198.3" y="580.7"/>
<use href="#pin" x="545.9" y="583.7"/>
<use href="#pin" x="549.5" y="586.1"/>
<use href="#pin" x="551.0" y="588.0"/>
<use href="#pin" x="543.6" y="588.5"/>
<use href="#pin" x="553.1" y="590.8"/>
<use href="#pin" x="401.5" y="596.4"/>
<use href="#pin" x="404.0" y="596.4"/>
<use href="#pin" x="192.4" y="601.0"/>
<use href="#pin" x="447.3" y="605.3"/>
<use href="#pin" x="568.5" y="611.0"/>
<use href="#pin" x="422.0" y="620.0"/>
<use href="#pin" x="420.6" y="621.0"/>
<use href="#pin" x="201.6" y="622.1"/>
<use href="#pin" x="424.4" y="622.8"/>
<use href="#pin" x="201.6" y="629.5"/>
<use href="#pin" x="219.4" y="629.8"/>
<use href="#pin" x="646.1" y="631.9"/>
<use href="#pin" x="434.6" y="633.7"/>
<use href="#pin" x="430.8" y="636.3"/>
<use href="#pin" x="464.6" y="638.3"/>
<use href="#pin" x="230.6" y="640.9"/>
<use href="#pin" x="451.6" y="641.4"/>
<use href="#pin" x="221.9" y="641.7"/>
<use href="#pin" x="447.8" y="642.1"/>
<use href="#pin" x="218.6" y="643.0"/>
<use href="#pin" x="449.5" y="643.0"/>
<use href="#pin" x="222.4" y="648.1"/>
<use href="#pin" x="659.8" y="659.7"/>
<use href="#pin" x="208.5" y="662.0"/>
<use href="#pin" x="211.5" y="662.8"/>
<use href="#pin" x="657.9" y="670.3"/>
<use href="#pin" x="366.4" y="673.7"/>
<use href="#pin" x="637.8" y="675.1"/>
<use href="#pin" x="656.8" y="675.8"/>
<use href="#pin" x="196.3" y="676.0"/>
<use href="#pin" x="629.7" y="676.3"/>
<use href="#pin" x="201.6" y="676.5"/>
<use href="#pin" x="197.5" y="684.9"/>
<g><rect x="40.6" y="426.4" width="11.4" height="23.2" rx="1.6" fill="#fff" stroke="#c4c0b8" stroke-width=".7"/><path d="M40.9,438H51.7" stroke="#ccc" stroke-width=".5"/><path d="M43.9,432.2h4.8M46.3,429.8v4.8M44.3,443.9h4" stroke="#222" stroke-width="1.1"/></g>
<rect x="621.8" y="691.9" width="79.7" height="5.4" fill="#fff" fill-opacity=".75"/>
<text x="623.4" y="696.1" font-family="'Liberation Sans',sans-serif" font-size="3.85" fill="#333"><tspan fill="#0078a8">Leaflet</tspan> | © <tspan fill="#0078a8">OpenStreetMap</tspan> contributors</text>
</svg>
</body></html>
